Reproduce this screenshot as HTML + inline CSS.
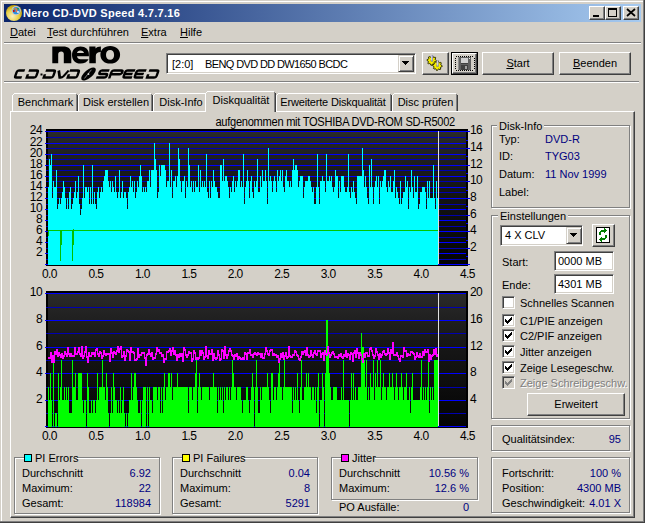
<!DOCTYPE html><html><head><meta charset="utf-8"><style>
html,body{margin:0;padding:0}
body{width:645px;height:523px;position:relative;overflow:hidden;background:#d4d0c8;font-family:"Liberation Sans",sans-serif;font-size:11px;color:#000}
.r,.t,.raised,.sunken,.grp,svg{position:absolute}
.t{white-space:nowrap;line-height:13px;letter-spacing:0px}
.raised{box-sizing:border-box;border:1px solid;border-color:#fff #404040 #404040 #fff;box-shadow:inset -1px -1px 0 #808080}
.sunken{box-sizing:border-box;border:1px solid;border-color:#808080 #fff #fff #808080;box-shadow:inset 1px 1px 0 #404040,inset -1px -1px 0 #d4d0c8;background:#fff}
.grp{box-sizing:border-box;border:1px solid #808080;box-shadow:inset 1px 1px 0 #fff,1px 1px 0 #fff}
.lbl{background:#d4d0c8;padding:0 2px}
.v{color:#000080}
u{text-decoration:underline;text-underline-offset:1px;text-decoration-thickness:1px}
</style></head><body>
<div class="r" style="left:0px;top:0px;width:645px;height:523px;background:#d4d0c8;"></div>
<div class="r" style="left:1px;top:1px;width:642px;height:1px;background:#ffffff;"></div>
<div class="r" style="left:1px;top:1px;width:1px;height:520px;background:#ffffff;"></div>
<div class="r" style="left:643px;top:0px;width:1px;height:522px;background:#808080;"></div>
<div class="r" style="left:0px;top:521px;width:644px;height:1px;background:#808080;"></div>
<div class="r" style="left:644px;top:0px;width:1px;height:523px;background:#404040;"></div>
<div class="r" style="left:0px;top:522px;width:645px;height:1px;background:#404040;"></div>
<div class="r" style="left:4px;top:4px;width:637px;height:18px;background:linear-gradient(to right,#0a246a,#a6caf0)"></div>
<div class="t" style="left:23px;top:7px;color:#fff;font-weight:bold;letter-spacing:0.28px">Nero CD-DVD Speed 4.7.7.16</div>
<svg style="left:5px;top:4px" width="18" height="18" viewBox="0 0 18 18">
<defs><radialGradient id="gold" cx="0.4" cy="0.7" r="0.7"><stop offset="0" stop-color="#f8f0c0"/><stop offset="0.55" stop-color="#e8d048"/><stop offset="1" stop-color="#b89800"/></radialGradient></defs>
<circle cx="9" cy="9" r="8" fill="url(#gold)"/>
<circle cx="11.2" cy="6.6" r="4.6" fill="#c8c8d0"/><circle cx="11.2" cy="6.6" r="3.6" fill="#2890e0"/>
<path d="M10 4 L12 6 L11 8" stroke="#f07040" stroke-width="1.4" fill="none"/><rect x="8" y="5.5" width="1.6" height="2.5" fill="#c01010"/><rect x="12" y="4" width="2" height="1.5" fill="#30a040"/><circle cx="13" cy="8" r="1" fill="#f0f0f0"/><rect x="8" y="4.5" width="1.2" height="1.2" fill="#f0e020"/>
</svg>
<div class="raised" style="left:589px;top:6px;width:16px;height:14px;background:#d4d0c8"></div>
<div class="raised" style="left:605px;top:6px;width:16px;height:14px;background:#d4d0c8"></div>
<div class="raised" style="left:623px;top:6px;width:16px;height:14px;background:#d4d0c8"></div>
<svg style="left:589px;top:6px" width="50" height="14" viewBox="0 0 50 14">
<rect x="4" y="9" width="6" height="2" fill="#000"/>
<rect x="19.5" y="2.5" width="8" height="8" fill="none" stroke="#000" stroke-width="1"/><rect x="19" y="2" width="9" height="2" fill="#000"/>
<path d="M38 3 L46 10 M46 3 L38 10" stroke="#000" stroke-width="1.7"/>
</svg>
<div class="t" style="left:10px;top:26px;"><u>D</u>atei</div>
<div class="t" style="left:47px;top:26px;"><u>T</u>est durchführen</div>
<div class="t" style="left:141px;top:26px;"><u>E</u>xtra</div>
<div class="t" style="left:180px;top:26px;"><u>H</u>ilfe</div>
<div class="r" style="left:4px;top:42px;width:637px;height:1px;background:#808080;"></div>
<div class="r" style="left:4px;top:43px;width:637px;height:1px;background:#ffffff;"></div>
<div class="r" style="left:4px;top:81px;width:635px;height:1px;background:#808080;"></div>
<div class="r" style="left:4px;top:82px;width:635px;height:1px;background:#ffffff;"></div>
<svg style="left:0px;top:0px" width="200" height="90" viewBox="0 0 200 90">
<g fill="#000" fill-rule="evenodd">
<path d="M52.3 46.4 H63 C68.5 46.4 71.3 49 71.3 53.5 V63.3 H63.8 V54 C63.8 52.3 63 51.4 61.3 51.4 C59.3 51.4 58.2 52.6 58.2 54.5 V63.3 H52.3 Z"/>
<path d="M80.5 46.4 C85.5 46.4 88.9 49.5 88.9 54 V56.3 H77 C77.3 58.2 78.5 59.3 80.5 59.3 H88.6 C87.3 62 84.3 63.6 80.5 63.6 C75.3 63.6 72 60.2 72 55 C72 49.8 75.3 46.4 80.5 46.4 Z M77 52.9 C77.3 51.3 78.5 50.4 80.4 50.4 C82.4 50.4 83.7 51.3 84 52.9 Z"/>
<path d="M89.3 46.5 H95.5 V48.6 C96.5 47.2 98.3 46.5 100.9 46.5 V51.9 C97.5 51.9 95.8 53 95.8 56 V63.3 H89.3 Z"/>
<path d="M110.2 46.1 C116.2 46.1 120.1 49.6 120.1 54.8 C120.1 60 116.2 63.6 110.2 63.6 C104.2 63.6 100.4 60 100.4 54.8 C100.4 49.6 104.2 46.1 110.2 46.1 Z M110.1 50.1 C107.6 50.1 106 51.9 106 54.9 C106 57.9 107.6 59.7 110.1 59.7 C112.6 59.7 114.1 57.9 114.1 54.9 C114.1 51.9 112.6 50.1 110.1 50.1 Z"/>
</g>
<g transform="translate(0 74) skewX(-20) translate(0 -74)" fill="none" stroke="#000" stroke-width="2.5">
<path d="M23.5 70.5 H17.8 Q16 70.5 16 72.3 V75.7 Q16 77.5 17.8 77.5 H23"/>
<path d="M27.5 70.5 H35.2 Q37 70.5 37 72.3 V75.7 Q37 77.5 35.2 77.5 H27 M28 74.2 V78.5"/>
<path d="M44.5 70.5 H52.2 Q54 70.5 54 72.3 V75.7 Q54 77.5 52.2 77.5 H44 M45 74.2 V78.5"/>
<path d="M57.5 70.5 L61 77.5 H62.2 Q63.6 77.5 64.4 76.2 L67.4 70.5"/>
<path d="M68.5 70.5 H76.2 Q78 70.5 78 72.3 V75.7 Q78 77.5 76.2 77.5 H68 M69 74.2 V78.5"/>
<path d="M108 70.5 H100.5 Q99 70.5 99 72 Q99 74 100.5 74 H105.8 Q107.4 74 107.4 75.7 Q107.4 77.5 105.6 77.5 H97.5"/>
<path d="M110.8 78.5 V72.3 Q110.8 70.5 112.6 70.5 H119.8 Q121.6 70.5 121.6 72.3 Q121.6 74.2 119.8 74.2 H111.5"/>
<path d="M133.8 70.5 H126.3 Q124.5 70.5 124.5 72.3 V75.7 Q124.5 77.5 126.3 77.5 H133.3 M125.5 74 H132.5"/>
<path d="M145 70.5 H137.5 Q135.7 70.5 135.7 72.3 V75.7 Q135.7 77.5 137.5 77.5 H144.5 M136.7 74 H143.7"/>
<path d="M147.8 70.5 H155.5 Q157.3 70.5 157.3 72.3 V75.7 Q157.3 77.5 155.5 77.5 H147.3 M148.3 74.2 V78.5"/>
</g>
<rect x="40.5" y="73.5" width="2" height="2" fill="#000"/>
<g transform="translate(88.5 74) rotate(-40)"><ellipse cx="0" cy="0" rx="9" ry="4" fill="#000"/><path d="M-6 0.8 L5 -1.4" stroke="#d8d8d8" stroke-width="0.7" opacity="0.8"/><circle cx="0" cy="0" r="0.9" fill="#e0e0e0"/></g>
</svg>
<div class="sunken" style="left:166px;top:53px;width:250px;height:21px;"></div>
<div class="t" style="left:172px;top:58px;">[2:0]</div>
<div class="t" style="left:205px;top:58px;letter-spacing:-0.62px">BENQ DVD DD DW1650 BCDC</div>
<div class="r" style="left:398px;top:55px;width:16px;height:17px;background:#d4d0c8;box-sizing:border-box;border:1px solid;border-color:#d4d0c8 #404040 #404040 #d4d0c8;box-shadow:inset 1px 1px 0 #fff,inset -1px -1px 0 #808080"></div>
<svg style="left:402px;top:61px" width="7" height="4" shape-rendering="crispEdges"><rect x="0" y="0" width="7" height="1"/><rect x="1" y="1" width="5" height="1"/><rect x="2" y="2" width="3" height="1"/><rect x="3" y="3" width="1" height="1"/></svg>
<div class="raised" style="left:422px;top:52px;width:27px;height:23px;background:#d4d0c8"></div>
<svg style="left:422px;top:52px" width="27" height="23" viewBox="0 0 27 23">
<polygon points="14.60,8.50 14.51,9.44 13.13,9.88 12.79,10.50 13.19,11.89 12.47,12.49 11.18,11.83 10.50,12.03 9.80,13.30 8.86,13.21 8.42,11.83 7.80,11.49 6.41,11.89 5.81,11.17 6.47,9.88 6.27,9.20 5.00,8.50 5.09,7.56 6.47,7.12 6.81,6.50 6.41,5.11 7.13,4.51 8.42,5.17 9.10,4.97 9.80,3.70 10.74,3.79 11.18,5.17 11.80,5.51 13.19,5.11 13.79,5.83 13.13,7.12 13.33,7.80" fill="#f8f000" stroke="#202000" stroke-width="0.9"/><circle cx="9.8" cy="8.5" r="1.6" fill="#c8c000"/>
<polygon points="20.20,13.70 20.11,14.64 18.73,15.08 18.39,15.70 18.79,17.09 18.07,17.69 16.78,17.03 16.10,17.23 15.40,18.50 14.46,18.41 14.02,17.03 13.40,16.69 12.01,17.09 11.41,16.37 12.07,15.08 11.87,14.40 10.60,13.70 10.69,12.76 12.07,12.32 12.41,11.70 12.01,10.31 12.73,9.71 14.02,10.37 14.70,10.17 15.40,8.90 16.34,8.99 16.78,10.37 17.40,10.71 18.79,10.31 19.39,11.03 18.73,12.32 18.93,13.00" fill="#f8f000" stroke="#202000" stroke-width="0.9"/><circle cx="15.4" cy="13.7" r="1.6" fill="#c8c000"/>
<rect x="9" y="3" width="2" height="6.5" fill="#9090b0"/><rect x="9.3" y="3.3" width="0.8" height="5" fill="#e8e8f8"/>
<rect x="14.6" y="8.2" width="2" height="6.5" fill="#9090b0"/><rect x="14.9" y="8.5" width="0.8" height="5" fill="#e8e8f8"/>
</svg>
<div class="r" style="left:451px;top:52px;width:27px;height:23px;box-sizing:border-box;border:1px solid #000;background:#d4d0c8"></div>
<div class="raised" style="left:452px;top:53px;width:25px;height:21px;background:#d4d0c8"></div>
<svg style="left:451px;top:52px" width="27" height="23" viewBox="0 0 27 23" shape-rendering="crispEdges">
<g fill="#000"><rect x="5" y="4" width="1" height="1"/><rect x="5" y="18" width="1" height="1"/><rect x="7" y="4" width="1" height="1"/><rect x="7" y="18" width="1" height="1"/><rect x="9" y="4" width="1" height="1"/><rect x="9" y="18" width="1" height="1"/><rect x="11" y="4" width="1" height="1"/><rect x="11" y="18" width="1" height="1"/><rect x="13" y="4" width="1" height="1"/><rect x="13" y="18" width="1" height="1"/><rect x="15" y="4" width="1" height="1"/><rect x="15" y="18" width="1" height="1"/><rect x="17" y="4" width="1" height="1"/><rect x="17" y="18" width="1" height="1"/><rect x="19" y="4" width="1" height="1"/><rect x="19" y="18" width="1" height="1"/><rect x="21" y="4" width="1" height="1"/><rect x="21" y="18" width="1" height="1"/><rect x="4" y="6" width="1" height="1"/><rect x="23" y="6" width="1" height="1"/><rect x="4" y="8" width="1" height="1"/><rect x="23" y="8" width="1" height="1"/><rect x="4" y="10" width="1" height="1"/><rect x="23" y="10" width="1" height="1"/><rect x="4" y="12" width="1" height="1"/><rect x="23" y="12" width="1" height="1"/><rect x="4" y="14" width="1" height="1"/><rect x="23" y="14" width="1" height="1"/><rect x="4" y="16" width="1" height="1"/><rect x="23" y="16" width="1" height="1"/></g>
<rect x="7" y="5" width="13" height="13" fill="#606060"/><rect x="7" y="5" width="1" height="13" fill="#909090"/>
<rect x="10" y="6" width="7" height="5" fill="#d0d0d0"/><rect x="10" y="11" width="7" height="1" fill="#404040"/>
<rect x="10" y="13" width="7" height="5" fill="#404040"/><rect x="14" y="14" width="2" height="3" fill="#a0a0a0"/><rect x="18" y="6" width="1" height="1" fill="#f0f0f0"/>
</svg>
<div class="raised" style="left:482px;top:52px;width:72px;height:23px;background:#d4d0c8"></div>
<div class="t" style="left:483.0px;width:70px;text-align:center;top:57px;"><u>S</u>tart</div>
<div class="raised" style="left:559px;top:52px;width:72px;height:23px;background:#d4d0c8"></div>
<div class="t" style="left:560.0px;width:70px;text-align:center;top:57px;"><u>B</u>eenden</div>
<div class="r" style="left:10px;top:111px;width:625px;height:407px;box-sizing:border-box;border:1px solid;border-color:#fff #404040 #404040 #fff;box-shadow:inset -1px -1px 0 #808080"></div>
<div class="r" style="left:12px;top:93px;width:66px;height:18px;background:#d4d0c8"></div>
<div class="r" style="left:14px;top:93px;width:62px;height:1px;background:#ffffff;"></div>
<div class="r" style="left:13px;top:94px;width:1px;height:1px;background:#ffffff;"></div>
<div class="r" style="left:12px;top:95px;width:1px;height:16px;background:#ffffff;"></div>
<div class="r" style="left:76px;top:94px;width:1px;height:17px;background:#808080;"></div>
<div class="r" style="left:77px;top:95px;width:1px;height:16px;background:#404040;"></div>
<div class="t" style="left:8.0px;width:75px;text-align:center;top:96px;">Benchmark</div>
<div class="r" style="left:78px;top:93px;width:75px;height:18px;background:#d4d0c8"></div>
<div class="r" style="left:80px;top:93px;width:71px;height:1px;background:#ffffff;"></div>
<div class="r" style="left:79px;top:94px;width:1px;height:1px;background:#ffffff;"></div>
<div class="r" style="left:78px;top:95px;width:1px;height:16px;background:#ffffff;"></div>
<div class="r" style="left:151px;top:94px;width:1px;height:17px;background:#808080;"></div>
<div class="r" style="left:152px;top:95px;width:1px;height:16px;background:#404040;"></div>
<div class="t" style="left:74.0px;width:84px;text-align:center;top:96px;">Disk erstellen</div>
<div class="r" style="left:153px;top:93px;width:55px;height:18px;background:#d4d0c8"></div>
<div class="r" style="left:155px;top:93px;width:51px;height:1px;background:#ffffff;"></div>
<div class="r" style="left:154px;top:94px;width:1px;height:1px;background:#ffffff;"></div>
<div class="r" style="left:153px;top:95px;width:1px;height:16px;background:#ffffff;"></div>
<div class="r" style="left:206px;top:94px;width:1px;height:17px;background:#808080;"></div>
<div class="r" style="left:207px;top:95px;width:1px;height:16px;background:#404040;"></div>
<div class="t" style="left:149.0px;width:64px;text-align:center;top:96px;">Disk-Info</div>
<div class="r" style="left:276px;top:93px;width:116px;height:18px;background:#d4d0c8"></div>
<div class="r" style="left:278px;top:93px;width:112px;height:1px;background:#ffffff;"></div>
<div class="r" style="left:277px;top:94px;width:1px;height:1px;background:#ffffff;"></div>
<div class="r" style="left:276px;top:95px;width:1px;height:16px;background:#ffffff;"></div>
<div class="r" style="left:390px;top:94px;width:1px;height:17px;background:#808080;"></div>
<div class="r" style="left:391px;top:95px;width:1px;height:16px;background:#404040;"></div>
<div class="t" style="left:270.5px;width:125px;text-align:center;top:96px;letter-spacing:-0.18px">Erweiterte Diskqualität</div>
<div class="r" style="left:392px;top:93px;width:66px;height:18px;background:#d4d0c8"></div>
<div class="r" style="left:394px;top:93px;width:62px;height:1px;background:#ffffff;"></div>
<div class="r" style="left:393px;top:94px;width:1px;height:1px;background:#ffffff;"></div>
<div class="r" style="left:392px;top:95px;width:1px;height:16px;background:#ffffff;"></div>
<div class="r" style="left:456px;top:94px;width:1px;height:17px;background:#808080;"></div>
<div class="r" style="left:457px;top:95px;width:1px;height:16px;background:#404040;"></div>
<div class="t" style="left:388.0px;width:75px;text-align:center;top:96px;">Disc prüfen</div>
<div class="r" style="left:205px;top:91px;width:71px;height:21px;background:#d4d0c8"></div>
<div class="r" style="left:207px;top:91px;width:67px;height:1px;background:#ffffff;"></div>
<div class="r" style="left:206px;top:92px;width:1px;height:1px;background:#ffffff;"></div>
<div class="r" style="left:205px;top:93px;width:1px;height:19px;background:#ffffff;"></div>
<div class="r" style="left:274px;top:92px;width:1px;height:20px;background:#808080;"></div>
<div class="r" style="left:275px;top:93px;width:1px;height:19px;background:#404040;"></div>
<div class="t" style="left:201.0px;width:80px;text-align:center;top:94px;">Diskqualität</div>
<div class="grp" style="left:491px;top:125px;width:139px;height:83px"></div>
<div class="t" style="left:497px;top:120px;"><span class="lbl">Disk-Info</span></div>
<div class="t" style="left:499px;top:133px;">Typ:</div>
<div class="t" style="left:545px;top:133px;color:#000080">DVD-R</div>
<div class="t" style="left:499px;top:150px;">ID:</div>
<div class="t" style="left:545px;top:150px;color:#000080">TYG03</div>
<div class="t" style="left:499px;top:168px;">Datum:</div>
<div class="t" style="left:545px;top:168px;color:#000080">11 Nov 1999</div>
<div class="t" style="left:499px;top:186px;">Label:</div>
<div class="grp" style="left:491px;top:215px;width:139px;height:204px"></div>
<div class="t" style="left:498px;top:210px;"><span class="lbl">Einstellungen</span></div>
<div class="sunken" style="left:500px;top:225px;width:83px;height:21px;"></div>
<div class="t" style="left:505px;top:229px;">4 X CLV</div>
<div class="r" style="left:566px;top:227px;width:16px;height:17px;background:#d4d0c8;box-sizing:border-box;border:1px solid;border-color:#d4d0c8 #404040 #404040 #d4d0c8;box-shadow:inset 1px 1px 0 #fff,inset -1px -1px 0 #808080"></div>
<svg style="left:570px;top:233px" width="7" height="4" shape-rendering="crispEdges"><rect x="0" y="0" width="7" height="1"/><rect x="1" y="1" width="5" height="1"/><rect x="2" y="2" width="3" height="1"/><rect x="3" y="3" width="1" height="1"/></svg>
<div class="raised" style="left:592px;top:224px;width:23px;height:23px;background:#d4d0c8"></div>
<svg style="left:592px;top:224px" width="23" height="23" viewBox="0 0 23 23" shape-rendering="crispEdges">
<rect x="4" y="3" width="14" height="16" fill="#000"/><rect x="5" y="4" width="12" height="14" fill="#fff"/>
<g fill="#008000">
<rect x="7" y="8" width="2" height="3"/><rect x="8" y="7" width="2" height="1"/><rect x="9" y="6" width="4" height="2"/><rect x="12" y="4" width="1" height="5"/><rect x="13" y="5" width="1" height="3"/><rect x="14" y="6" width="1" height="1"/>
<rect x="13" y="11" width="2" height="3"/><rect x="12" y="14" width="2" height="1"/><rect x="9" y="14" width="4" height="2"/><rect x="9" y="13" width="1" height="5"/><rect x="8" y="14" width="1" height="3"/><rect x="7" y="15" width="1" height="1"/>
</g></svg>
<div class="t" style="left:502px;top:256px;">Start:</div>
<div class="sunken" style="left:554px;top:251px;width:60px;height:20px;"></div>
<div class="t" style="left:558px;top:255px;">0000 MB</div>
<div class="t" style="left:502px;top:279px;">Ende:</div>
<div class="sunken" style="left:554px;top:274px;width:60px;height:20px;"></div>
<div class="t" style="left:558px;top:278px;">4301 MB</div>
<div class="sunken" style="left:502px;top:296px;width:13px;height:13px;"></div>
<div class="t" style="left:520px;top:297px;">Schnelles Scannen</div>
<div class="sunken" style="left:502px;top:314px;width:13px;height:13px;"></div>
<svg style="left:502px;top:314px" width="13" height="13" fill="#000" shape-rendering="crispEdges"><rect x="9" y="3" width="1" height="1"/><rect x="8" y="4" width="1" height="1"/><rect x="9" y="4" width="1" height="1"/><rect x="3" y="5" width="1" height="1"/><rect x="7" y="5" width="1" height="1"/><rect x="8" y="5" width="1" height="1"/><rect x="9" y="5" width="1" height="1"/><rect x="3" y="6" width="1" height="1"/><rect x="4" y="6" width="1" height="1"/><rect x="6" y="6" width="1" height="1"/><rect x="7" y="6" width="1" height="1"/><rect x="8" y="6" width="1" height="1"/><rect x="3" y="7" width="1" height="1"/><rect x="4" y="7" width="1" height="1"/><rect x="5" y="7" width="1" height="1"/><rect x="6" y="7" width="1" height="1"/><rect x="7" y="7" width="1" height="1"/><rect x="4" y="8" width="1" height="1"/><rect x="5" y="8" width="1" height="1"/><rect x="6" y="8" width="1" height="1"/><rect x="5" y="9" width="1" height="1"/></svg>
<div class="t" style="left:520px;top:315px;">C1/PIE anzeigen</div>
<div class="sunken" style="left:502px;top:329px;width:13px;height:13px;"></div>
<svg style="left:502px;top:329px" width="13" height="13" fill="#000" shape-rendering="crispEdges"><rect x="9" y="3" width="1" height="1"/><rect x="8" y="4" width="1" height="1"/><rect x="9" y="4" width="1" height="1"/><rect x="3" y="5" width="1" height="1"/><rect x="7" y="5" width="1" height="1"/><rect x="8" y="5" width="1" height="1"/><rect x="9" y="5" width="1" height="1"/><rect x="3" y="6" width="1" height="1"/><rect x="4" y="6" width="1" height="1"/><rect x="6" y="6" width="1" height="1"/><rect x="7" y="6" width="1" height="1"/><rect x="8" y="6" width="1" height="1"/><rect x="3" y="7" width="1" height="1"/><rect x="4" y="7" width="1" height="1"/><rect x="5" y="7" width="1" height="1"/><rect x="6" y="7" width="1" height="1"/><rect x="7" y="7" width="1" height="1"/><rect x="4" y="8" width="1" height="1"/><rect x="5" y="8" width="1" height="1"/><rect x="6" y="8" width="1" height="1"/><rect x="5" y="9" width="1" height="1"/></svg>
<div class="t" style="left:520px;top:330px;">C2/PIF anzeigen</div>
<div class="sunken" style="left:502px;top:345px;width:13px;height:13px;"></div>
<svg style="left:502px;top:345px" width="13" height="13" fill="#000" shape-rendering="crispEdges"><rect x="9" y="3" width="1" height="1"/><rect x="8" y="4" width="1" height="1"/><rect x="9" y="4" width="1" height="1"/><rect x="3" y="5" width="1" height="1"/><rect x="7" y="5" width="1" height="1"/><rect x="8" y="5" width="1" height="1"/><rect x="9" y="5" width="1" height="1"/><rect x="3" y="6" width="1" height="1"/><rect x="4" y="6" width="1" height="1"/><rect x="6" y="6" width="1" height="1"/><rect x="7" y="6" width="1" height="1"/><rect x="8" y="6" width="1" height="1"/><rect x="3" y="7" width="1" height="1"/><rect x="4" y="7" width="1" height="1"/><rect x="5" y="7" width="1" height="1"/><rect x="6" y="7" width="1" height="1"/><rect x="7" y="7" width="1" height="1"/><rect x="4" y="8" width="1" height="1"/><rect x="5" y="8" width="1" height="1"/><rect x="6" y="8" width="1" height="1"/><rect x="5" y="9" width="1" height="1"/></svg>
<div class="t" style="left:520px;top:346px;">Jitter anzeigen</div>
<div class="sunken" style="left:502px;top:361px;width:13px;height:13px;"></div>
<svg style="left:502px;top:361px" width="13" height="13" fill="#000" shape-rendering="crispEdges"><rect x="9" y="3" width="1" height="1"/><rect x="8" y="4" width="1" height="1"/><rect x="9" y="4" width="1" height="1"/><rect x="3" y="5" width="1" height="1"/><rect x="7" y="5" width="1" height="1"/><rect x="8" y="5" width="1" height="1"/><rect x="9" y="5" width="1" height="1"/><rect x="3" y="6" width="1" height="1"/><rect x="4" y="6" width="1" height="1"/><rect x="6" y="6" width="1" height="1"/><rect x="7" y="6" width="1" height="1"/><rect x="8" y="6" width="1" height="1"/><rect x="3" y="7" width="1" height="1"/><rect x="4" y="7" width="1" height="1"/><rect x="5" y="7" width="1" height="1"/><rect x="6" y="7" width="1" height="1"/><rect x="7" y="7" width="1" height="1"/><rect x="4" y="8" width="1" height="1"/><rect x="5" y="8" width="1" height="1"/><rect x="6" y="8" width="1" height="1"/><rect x="5" y="9" width="1" height="1"/></svg>
<div class="t" style="left:520px;top:362px;">Zeige Lesegeschw.</div>
<div class="sunken" style="left:502px;top:376px;width:13px;height:13px;background:#d4d0c8"></div>
<svg style="left:502px;top:376px" width="13" height="13" fill="#808080" shape-rendering="crispEdges"><rect x="9" y="3" width="1" height="1"/><rect x="8" y="4" width="1" height="1"/><rect x="9" y="4" width="1" height="1"/><rect x="3" y="5" width="1" height="1"/><rect x="7" y="5" width="1" height="1"/><rect x="8" y="5" width="1" height="1"/><rect x="9" y="5" width="1" height="1"/><rect x="3" y="6" width="1" height="1"/><rect x="4" y="6" width="1" height="1"/><rect x="6" y="6" width="1" height="1"/><rect x="7" y="6" width="1" height="1"/><rect x="8" y="6" width="1" height="1"/><rect x="3" y="7" width="1" height="1"/><rect x="4" y="7" width="1" height="1"/><rect x="5" y="7" width="1" height="1"/><rect x="6" y="7" width="1" height="1"/><rect x="7" y="7" width="1" height="1"/><rect x="4" y="8" width="1" height="1"/><rect x="5" y="8" width="1" height="1"/><rect x="6" y="8" width="1" height="1"/><rect x="5" y="9" width="1" height="1"/></svg>
<div class="t" style="left:521px;top:378px;color:#fff;">Zeige Schreibgeschw.</div>
<div class="t" style="left:520px;top:377px;color:#808080;">Zeige Schreibgeschw.</div>
<div class="raised" style="left:527px;top:393px;width:98px;height:23px;background:#d4d0c8"></div>
<div class="t" style="left:531.0px;width:90px;text-align:center;top:398px;">Erweitert</div>
<div class="grp" style="left:491px;top:425px;width:139px;height:26px"></div>
<div class="t" style="left:502px;top:433px;">Qualitätsindex:</div>
<div class="t" style="right:24px;top:433px;color:#000080">95</div>
<div class="grp" style="left:491px;top:457px;width:139px;height:56px"></div>
<div class="t" style="left:502px;top:467px;">Fortschritt:</div>
<div class="t" style="right:24px;top:467px;color:#000080">100 %</div>
<div class="t" style="left:502px;top:482px;">Position:</div>
<div class="t" style="right:24px;top:482px;color:#000080">4300 MB</div>
<div class="t" style="left:502px;top:497px;">Geschwindigkeit:</div>
<div class="t" style="right:24px;top:497px;color:#000080">4.01 X</div>
<div class="grp" style="left:14px;top:457px;width:146px;height:57px"></div>
<div class="r" style="left:24px;top:452px;width:53px;height:12px;background:#d4d0c8"></div>
<div class="r" style="left:24px;top:454px;width:8px;height:8px;box-sizing:border-box;border:1px solid #000;background:#00ffff"></div>
<div class="t" style="left:35px;top:452px;">PI Errors</div>
<div class="t" style="left:22px;top:467px;">Durchschnitt</div>
<div class="t" style="right:494px;top:467px;color:#000080">6.92</div>
<div class="t" style="left:22px;top:482px;">Maximum:</div>
<div class="t" style="right:494px;top:482px;color:#000080">22</div>
<div class="t" style="left:22px;top:497px;">Gesamt:</div>
<div class="t" style="right:494px;top:497px;color:#000080">118984</div>
<div class="grp" style="left:172px;top:457px;width:146px;height:57px"></div>
<div class="r" style="left:182px;top:452px;width:62px;height:12px;background:#d4d0c8"></div>
<div class="r" style="left:182px;top:454px;width:8px;height:8px;box-sizing:border-box;border:1px solid #000;background:#ffff00"></div>
<div class="t" style="left:193px;top:452px;">PI Failures</div>
<div class="t" style="left:180px;top:467px;">Durchschnitt</div>
<div class="t" style="right:335px;top:467px;color:#000080">0.04</div>
<div class="t" style="left:180px;top:482px;">Maximum:</div>
<div class="t" style="right:335px;top:482px;color:#000080">8</div>
<div class="t" style="left:180px;top:497px;">Gesamt:</div>
<div class="t" style="right:335px;top:497px;color:#000080">5291</div>
<div class="grp" style="left:331px;top:457px;width:147px;height:43px"></div>
<div class="r" style="left:341px;top:452px;width:34px;height:12px;background:#d4d0c8"></div>
<div class="r" style="left:341px;top:454px;width:8px;height:8px;box-sizing:border-box;border:1px solid #000;background:#ff00ff"></div>
<div class="t" style="left:352px;top:452px;">Jitter</div>
<div class="t" style="left:339px;top:467px;">Durchschnitt</div>
<div class="t" style="right:176px;top:467px;color:#000080">10.56 %</div>
<div class="t" style="left:339px;top:482px;">Maximum:</div>
<div class="t" style="right:176px;top:482px;color:#000080">12.6 %</div>
<div class="t" style="left:339px;top:501px;">PO Ausfälle:</div>
<div class="t" style="right:176px;top:501px;color:#000080">0</div>
<svg style="left:0px;top:0px" width="645" height="523" viewBox="0 0 645 523" shape-rendering="crispEdges"><defs><linearGradient id="bg129" x1="0" y1="0" x2="0" y2="1"><stop offset="0" stop-color="#2a2a2a"/><stop offset="0.35" stop-color="#181818"/><stop offset="1" stop-color="#040404"/></linearGradient></defs><rect x="46" y="129" width="422" height="137" fill="#000"/><rect x="48" y="131" width="418" height="133" fill="url(#bg129)"/><rect x="45" y="264" width="421" height="1" fill="#0000ff"/><rect x="46" y="259" width="420" height="1" fill="#0000b0"/><rect x="45" y="253" width="421" height="1" fill="#0000ff"/><rect x="46" y="248" width="420" height="1" fill="#0000b0"/><rect x="45" y="242" width="421" height="1" fill="#0000ff"/><rect x="46" y="237" width="420" height="1" fill="#0000b0"/><rect x="45" y="231" width="421" height="1" fill="#0000ff"/><rect x="46" y="226" width="420" height="1" fill="#0000b0"/><rect x="45" y="220" width="421" height="1" fill="#0000ff"/><rect x="46" y="215" width="420" height="1" fill="#0000b0"/><rect x="45" y="209" width="421" height="1" fill="#0000ff"/><rect x="46" y="204" width="420" height="1" fill="#0000b0"/><rect x="45" y="198" width="421" height="1" fill="#0000ff"/><rect x="46" y="192" width="420" height="1" fill="#0000b0"/><rect x="45" y="187" width="421" height="1" fill="#0000ff"/><rect x="46" y="181" width="420" height="1" fill="#0000b0"/><rect x="45" y="176" width="421" height="1" fill="#0000ff"/><rect x="46" y="170" width="420" height="1" fill="#0000b0"/><rect x="45" y="165" width="421" height="1" fill="#0000ff"/><rect x="46" y="159" width="420" height="1" fill="#0000b0"/><rect x="45" y="154" width="421" height="1" fill="#0000ff"/><rect x="46" y="148" width="420" height="1" fill="#0000b0"/><rect x="45" y="143" width="421" height="1" fill="#0000ff"/><rect x="46" y="137" width="420" height="1" fill="#0000b0"/><rect x="45" y="131" width="421" height="1" fill="#0000ff"/><rect x="48" y="187" width="1" height="78" fill="#00ffff"/><rect x="49" y="159" width="1" height="106" fill="#00ffff"/><rect x="50" y="165" width="1" height="100" fill="#00ffff"/><rect x="51" y="154" width="1" height="111" fill="#00ffff"/><rect x="52" y="198" width="1" height="67" fill="#00ffff"/><rect x="53" y="181" width="1" height="84" fill="#00ffff"/><rect x="54" y="187" width="2" height="78" fill="#00ffff"/><rect x="56" y="170" width="1" height="95" fill="#00ffff"/><rect x="57" y="209" width="1" height="56" fill="#00ffff"/><rect x="58" y="204" width="1" height="61" fill="#00ffff"/><rect x="59" y="198" width="1" height="67" fill="#00ffff"/><rect x="60" y="204" width="1" height="61" fill="#00ffff"/><rect x="61" y="198" width="1" height="67" fill="#00ffff"/><rect x="62" y="192" width="1" height="73" fill="#00ffff"/><rect x="63" y="181" width="1" height="84" fill="#00ffff"/><rect x="64" y="187" width="1" height="78" fill="#00ffff"/><rect x="65" y="198" width="1" height="67" fill="#00ffff"/><rect x="66" y="209" width="1" height="56" fill="#00ffff"/><rect x="67" y="198" width="1" height="67" fill="#00ffff"/><rect x="68" y="209" width="1" height="56" fill="#00ffff"/><rect x="69" y="192" width="1" height="73" fill="#00ffff"/><rect x="70" y="187" width="1" height="78" fill="#00ffff"/><rect x="71" y="209" width="1" height="56" fill="#00ffff"/><rect x="72" y="204" width="1" height="61" fill="#00ffff"/><rect x="73" y="198" width="1" height="67" fill="#00ffff"/><rect x="74" y="192" width="1" height="73" fill="#00ffff"/><rect x="75" y="181" width="1" height="84" fill="#00ffff"/><rect x="76" y="198" width="1" height="67" fill="#00ffff"/><rect x="77" y="192" width="1" height="73" fill="#00ffff"/><rect x="78" y="176" width="1" height="89" fill="#00ffff"/><rect x="79" y="204" width="1" height="61" fill="#00ffff"/><rect x="80" y="215" width="1" height="50" fill="#00ffff"/><rect x="81" y="209" width="1" height="56" fill="#00ffff"/><rect x="82" y="198" width="1" height="67" fill="#00ffff"/><rect x="83" y="165" width="1" height="100" fill="#00ffff"/><rect x="84" y="198" width="1" height="67" fill="#00ffff"/><rect x="85" y="187" width="2" height="78" fill="#00ffff"/><rect x="87" y="192" width="1" height="73" fill="#00ffff"/><rect x="88" y="187" width="1" height="78" fill="#00ffff"/><rect x="89" y="204" width="1" height="61" fill="#00ffff"/><rect x="90" y="187" width="1" height="78" fill="#00ffff"/><rect x="91" y="204" width="1" height="61" fill="#00ffff"/><rect x="92" y="165" width="1" height="100" fill="#00ffff"/><rect x="93" y="204" width="1" height="61" fill="#00ffff"/><rect x="94" y="192" width="1" height="73" fill="#00ffff"/><rect x="95" y="204" width="1" height="61" fill="#00ffff"/><rect x="96" y="209" width="1" height="56" fill="#00ffff"/><rect x="97" y="192" width="1" height="73" fill="#00ffff"/><rect x="98" y="187" width="1" height="78" fill="#00ffff"/><rect x="99" y="198" width="1" height="67" fill="#00ffff"/><rect x="100" y="192" width="1" height="73" fill="#00ffff"/><rect x="101" y="187" width="1" height="78" fill="#00ffff"/><rect x="102" y="192" width="1" height="73" fill="#00ffff"/><rect x="103" y="181" width="1" height="84" fill="#00ffff"/><rect x="104" y="176" width="1" height="89" fill="#00ffff"/><rect x="105" y="170" width="3" height="95" fill="#00ffff"/><rect x="108" y="181" width="1" height="84" fill="#00ffff"/><rect x="109" y="187" width="1" height="78" fill="#00ffff"/><rect x="110" y="181" width="1" height="84" fill="#00ffff"/><rect x="111" y="192" width="1" height="73" fill="#00ffff"/><rect x="112" y="181" width="1" height="84" fill="#00ffff"/><rect x="113" y="187" width="1" height="78" fill="#00ffff"/><rect x="114" y="192" width="1" height="73" fill="#00ffff"/><rect x="115" y="176" width="1" height="89" fill="#00ffff"/><rect x="116" y="192" width="1" height="73" fill="#00ffff"/><rect x="117" y="198" width="1" height="67" fill="#00ffff"/><rect x="118" y="192" width="1" height="73" fill="#00ffff"/><rect x="119" y="170" width="1" height="95" fill="#00ffff"/><rect x="120" y="198" width="1" height="67" fill="#00ffff"/><rect x="121" y="192" width="1" height="73" fill="#00ffff"/><rect x="122" y="181" width="1" height="84" fill="#00ffff"/><rect x="123" y="198" width="1" height="67" fill="#00ffff"/><rect x="124" y="192" width="2" height="73" fill="#00ffff"/><rect x="126" y="198" width="1" height="67" fill="#00ffff"/><rect x="127" y="209" width="1" height="56" fill="#00ffff"/><rect x="128" y="192" width="1" height="73" fill="#00ffff"/><rect x="129" y="187" width="1" height="78" fill="#00ffff"/><rect x="130" y="176" width="1" height="89" fill="#00ffff"/><rect x="131" y="187" width="1" height="78" fill="#00ffff"/><rect x="132" y="181" width="1" height="84" fill="#00ffff"/><rect x="133" y="192" width="1" height="73" fill="#00ffff"/><rect x="134" y="181" width="1" height="84" fill="#00ffff"/><rect x="135" y="198" width="1" height="67" fill="#00ffff"/><rect x="136" y="192" width="1" height="73" fill="#00ffff"/><rect x="137" y="181" width="1" height="84" fill="#00ffff"/><rect x="138" y="187" width="1" height="78" fill="#00ffff"/><rect x="139" y="176" width="1" height="89" fill="#00ffff"/><rect x="140" y="165" width="1" height="100" fill="#00ffff"/><rect x="141" y="176" width="1" height="89" fill="#00ffff"/><rect x="142" y="192" width="1" height="73" fill="#00ffff"/><rect x="143" y="187" width="1" height="78" fill="#00ffff"/><rect x="144" y="192" width="1" height="73" fill="#00ffff"/><rect x="145" y="187" width="1" height="78" fill="#00ffff"/><rect x="146" y="192" width="1" height="73" fill="#00ffff"/><rect x="147" y="181" width="2" height="84" fill="#00ffff"/><rect x="149" y="170" width="1" height="95" fill="#00ffff"/><rect x="150" y="187" width="1" height="78" fill="#00ffff"/><rect x="151" y="170" width="3" height="95" fill="#00ffff"/><rect x="154" y="143" width="1" height="122" fill="#00ffff"/><rect x="155" y="159" width="1" height="106" fill="#00ffff"/><rect x="156" y="170" width="1" height="95" fill="#00ffff"/><rect x="157" y="198" width="1" height="67" fill="#00ffff"/><rect x="158" y="192" width="1" height="73" fill="#00ffff"/><rect x="159" y="165" width="1" height="100" fill="#00ffff"/><rect x="160" y="176" width="1" height="89" fill="#00ffff"/><rect x="161" y="165" width="4" height="100" fill="#00ffff"/><rect x="165" y="170" width="1" height="95" fill="#00ffff"/><rect x="166" y="187" width="1" height="78" fill="#00ffff"/><rect x="167" y="181" width="2" height="84" fill="#00ffff"/><rect x="169" y="143" width="1" height="122" fill="#00ffff"/><rect x="170" y="187" width="1" height="78" fill="#00ffff"/><rect x="171" y="170" width="1" height="95" fill="#00ffff"/><rect x="172" y="198" width="1" height="67" fill="#00ffff"/><rect x="173" y="181" width="2" height="84" fill="#00ffff"/><rect x="175" y="176" width="1" height="89" fill="#00ffff"/><rect x="176" y="187" width="1" height="78" fill="#00ffff"/><rect x="177" y="176" width="1" height="89" fill="#00ffff"/><rect x="178" y="148" width="1" height="117" fill="#00ffff"/><rect x="179" y="159" width="1" height="106" fill="#00ffff"/><rect x="180" y="181" width="1" height="84" fill="#00ffff"/><rect x="181" y="192" width="1" height="73" fill="#00ffff"/><rect x="182" y="181" width="2" height="84" fill="#00ffff"/><rect x="184" y="176" width="1" height="89" fill="#00ffff"/><rect x="185" y="198" width="1" height="67" fill="#00ffff"/><rect x="186" y="181" width="1" height="84" fill="#00ffff"/><rect x="187" y="187" width="1" height="78" fill="#00ffff"/><rect x="188" y="148" width="1" height="117" fill="#00ffff"/><rect x="189" y="165" width="1" height="100" fill="#00ffff"/><rect x="190" y="187" width="1" height="78" fill="#00ffff"/><rect x="191" y="181" width="1" height="84" fill="#00ffff"/><rect x="192" y="192" width="1" height="73" fill="#00ffff"/><rect x="193" y="181" width="1" height="84" fill="#00ffff"/><rect x="194" y="192" width="1" height="73" fill="#00ffff"/><rect x="195" y="181" width="1" height="84" fill="#00ffff"/><rect x="196" y="187" width="2" height="78" fill="#00ffff"/><rect x="198" y="165" width="1" height="100" fill="#00ffff"/><rect x="199" y="192" width="1" height="73" fill="#00ffff"/><rect x="200" y="170" width="1" height="95" fill="#00ffff"/><rect x="201" y="187" width="1" height="78" fill="#00ffff"/><rect x="202" y="181" width="1" height="84" fill="#00ffff"/><rect x="203" y="187" width="1" height="78" fill="#00ffff"/><rect x="204" y="181" width="1" height="84" fill="#00ffff"/><rect x="205" y="187" width="1" height="78" fill="#00ffff"/><rect x="206" y="154" width="1" height="111" fill="#00ffff"/><rect x="207" y="192" width="1" height="73" fill="#00ffff"/><rect x="208" y="198" width="1" height="67" fill="#00ffff"/><rect x="209" y="181" width="1" height="84" fill="#00ffff"/><rect x="210" y="198" width="1" height="67" fill="#00ffff"/><rect x="211" y="181" width="1" height="84" fill="#00ffff"/><rect x="212" y="187" width="1" height="78" fill="#00ffff"/><rect x="213" y="170" width="1" height="95" fill="#00ffff"/><rect x="214" y="181" width="1" height="84" fill="#00ffff"/><rect x="215" y="187" width="2" height="78" fill="#00ffff"/><rect x="217" y="192" width="1" height="73" fill="#00ffff"/><rect x="218" y="198" width="2" height="67" fill="#00ffff"/><rect x="220" y="165" width="2" height="100" fill="#00ffff"/><rect x="222" y="181" width="1" height="84" fill="#00ffff"/><rect x="223" y="159" width="1" height="106" fill="#00ffff"/><rect x="224" y="181" width="1" height="84" fill="#00ffff"/><rect x="225" y="176" width="2" height="89" fill="#00ffff"/><rect x="227" y="181" width="1" height="84" fill="#00ffff"/><rect x="228" y="187" width="1" height="78" fill="#00ffff"/><rect x="229" y="198" width="1" height="67" fill="#00ffff"/><rect x="230" y="187" width="1" height="78" fill="#00ffff"/><rect x="231" y="192" width="1" height="73" fill="#00ffff"/><rect x="232" y="181" width="1" height="84" fill="#00ffff"/><rect x="233" y="176" width="1" height="89" fill="#00ffff"/><rect x="234" y="192" width="1" height="73" fill="#00ffff"/><rect x="235" y="181" width="1" height="84" fill="#00ffff"/><rect x="236" y="187" width="1" height="78" fill="#00ffff"/><rect x="237" y="181" width="1" height="84" fill="#00ffff"/><rect x="238" y="170" width="2" height="95" fill="#00ffff"/><rect x="240" y="187" width="1" height="78" fill="#00ffff"/><rect x="241" y="181" width="1" height="84" fill="#00ffff"/><rect x="242" y="187" width="1" height="78" fill="#00ffff"/><rect x="243" y="154" width="1" height="111" fill="#00ffff"/><rect x="244" y="204" width="1" height="61" fill="#00ffff"/><rect x="245" y="187" width="1" height="78" fill="#00ffff"/><rect x="246" y="181" width="1" height="84" fill="#00ffff"/><rect x="247" y="170" width="1" height="95" fill="#00ffff"/><rect x="248" y="181" width="1" height="84" fill="#00ffff"/><rect x="249" y="198" width="1" height="67" fill="#00ffff"/><rect x="250" y="181" width="1" height="84" fill="#00ffff"/><rect x="251" y="176" width="1" height="89" fill="#00ffff"/><rect x="252" y="192" width="1" height="73" fill="#00ffff"/><rect x="253" y="198" width="1" height="67" fill="#00ffff"/><rect x="254" y="181" width="1" height="84" fill="#00ffff"/><rect x="255" y="187" width="1" height="78" fill="#00ffff"/><rect x="256" y="181" width="1" height="84" fill="#00ffff"/><rect x="257" y="159" width="1" height="106" fill="#00ffff"/><rect x="258" y="192" width="2" height="73" fill="#00ffff"/><rect x="260" y="176" width="1" height="89" fill="#00ffff"/><rect x="261" y="187" width="1" height="78" fill="#00ffff"/><rect x="262" y="170" width="1" height="95" fill="#00ffff"/><rect x="263" y="181" width="2" height="84" fill="#00ffff"/><rect x="265" y="170" width="1" height="95" fill="#00ffff"/><rect x="266" y="181" width="1" height="84" fill="#00ffff"/><rect x="267" y="204" width="1" height="61" fill="#00ffff"/><rect x="268" y="148" width="1" height="117" fill="#00ffff"/><rect x="269" y="181" width="1" height="84" fill="#00ffff"/><rect x="270" y="176" width="1" height="89" fill="#00ffff"/><rect x="271" y="181" width="1" height="84" fill="#00ffff"/><rect x="272" y="192" width="1" height="73" fill="#00ffff"/><rect x="273" y="181" width="1" height="84" fill="#00ffff"/><rect x="274" y="176" width="1" height="89" fill="#00ffff"/><rect x="275" y="181" width="1" height="84" fill="#00ffff"/><rect x="276" y="192" width="1" height="73" fill="#00ffff"/><rect x="277" y="170" width="1" height="95" fill="#00ffff"/><rect x="278" y="181" width="1" height="84" fill="#00ffff"/><rect x="279" y="176" width="1" height="89" fill="#00ffff"/><rect x="280" y="170" width="1" height="95" fill="#00ffff"/><rect x="281" y="181" width="1" height="84" fill="#00ffff"/><rect x="282" y="170" width="1" height="95" fill="#00ffff"/><rect x="283" y="187" width="1" height="78" fill="#00ffff"/><rect x="284" y="192" width="1" height="73" fill="#00ffff"/><rect x="285" y="176" width="1" height="89" fill="#00ffff"/><rect x="286" y="170" width="1" height="95" fill="#00ffff"/><rect x="287" y="181" width="2" height="84" fill="#00ffff"/><rect x="289" y="187" width="1" height="78" fill="#00ffff"/><rect x="290" y="181" width="1" height="84" fill="#00ffff"/><rect x="291" y="187" width="1" height="78" fill="#00ffff"/><rect x="292" y="170" width="1" height="95" fill="#00ffff"/><rect x="293" y="159" width="1" height="106" fill="#00ffff"/><rect x="294" y="170" width="1" height="95" fill="#00ffff"/><rect x="295" y="165" width="2" height="100" fill="#00ffff"/><rect x="297" y="170" width="1" height="95" fill="#00ffff"/><rect x="298" y="187" width="1" height="78" fill="#00ffff"/><rect x="299" y="181" width="1" height="84" fill="#00ffff"/><rect x="300" y="176" width="3" height="89" fill="#00ffff"/><rect x="303" y="198" width="1" height="67" fill="#00ffff"/><rect x="304" y="187" width="1" height="78" fill="#00ffff"/><rect x="305" y="181" width="3" height="84" fill="#00ffff"/><rect x="308" y="176" width="2" height="89" fill="#00ffff"/><rect x="310" y="181" width="1" height="84" fill="#00ffff"/><rect x="311" y="187" width="1" height="78" fill="#00ffff"/><rect x="312" y="192" width="1" height="73" fill="#00ffff"/><rect x="313" y="187" width="1" height="78" fill="#00ffff"/><rect x="314" y="204" width="2" height="61" fill="#00ffff"/><rect x="316" y="187" width="1" height="78" fill="#00ffff"/><rect x="317" y="154" width="1" height="111" fill="#00ffff"/><rect x="318" y="187" width="1" height="78" fill="#00ffff"/><rect x="319" y="204" width="1" height="61" fill="#00ffff"/><rect x="320" y="181" width="2" height="84" fill="#00ffff"/><rect x="322" y="176" width="1" height="89" fill="#00ffff"/><rect x="323" y="181" width="2" height="84" fill="#00ffff"/><rect x="325" y="192" width="1" height="73" fill="#00ffff"/><rect x="326" y="154" width="1" height="111" fill="#00ffff"/><rect x="327" y="181" width="2" height="84" fill="#00ffff"/><rect x="329" y="176" width="1" height="89" fill="#00ffff"/><rect x="330" y="181" width="1" height="84" fill="#00ffff"/><rect x="331" y="176" width="1" height="89" fill="#00ffff"/><rect x="332" y="187" width="1" height="78" fill="#00ffff"/><rect x="333" y="192" width="1" height="73" fill="#00ffff"/><rect x="334" y="187" width="1" height="78" fill="#00ffff"/><rect x="335" y="170" width="1" height="95" fill="#00ffff"/><rect x="336" y="176" width="2" height="89" fill="#00ffff"/><rect x="338" y="198" width="1" height="67" fill="#00ffff"/><rect x="339" y="181" width="1" height="84" fill="#00ffff"/><rect x="340" y="192" width="1" height="73" fill="#00ffff"/><rect x="341" y="176" width="3" height="89" fill="#00ffff"/><rect x="344" y="187" width="1" height="78" fill="#00ffff"/><rect x="345" y="192" width="2" height="73" fill="#00ffff"/><rect x="347" y="187" width="1" height="78" fill="#00ffff"/><rect x="348" y="154" width="1" height="111" fill="#00ffff"/><rect x="349" y="192" width="1" height="73" fill="#00ffff"/><rect x="350" y="198" width="1" height="67" fill="#00ffff"/><rect x="351" y="187" width="1" height="78" fill="#00ffff"/><rect x="352" y="192" width="1" height="73" fill="#00ffff"/><rect x="353" y="181" width="1" height="84" fill="#00ffff"/><rect x="354" y="192" width="1" height="73" fill="#00ffff"/><rect x="355" y="198" width="1" height="67" fill="#00ffff"/><rect x="356" y="204" width="1" height="61" fill="#00ffff"/><rect x="357" y="176" width="5" height="89" fill="#00ffff"/><rect x="362" y="148" width="1" height="117" fill="#00ffff"/><rect x="363" y="170" width="1" height="95" fill="#00ffff"/><rect x="364" y="187" width="1" height="78" fill="#00ffff"/><rect x="365" y="176" width="1" height="89" fill="#00ffff"/><rect x="366" y="187" width="1" height="78" fill="#00ffff"/><rect x="367" y="198" width="1" height="67" fill="#00ffff"/><rect x="368" y="204" width="1" height="61" fill="#00ffff"/><rect x="369" y="165" width="1" height="100" fill="#00ffff"/><rect x="370" y="187" width="1" height="78" fill="#00ffff"/><rect x="371" y="159" width="1" height="106" fill="#00ffff"/><rect x="372" y="187" width="1" height="78" fill="#00ffff"/><rect x="373" y="204" width="1" height="61" fill="#00ffff"/><rect x="374" y="187" width="1" height="78" fill="#00ffff"/><rect x="375" y="181" width="1" height="84" fill="#00ffff"/><rect x="376" y="176" width="1" height="89" fill="#00ffff"/><rect x="377" y="187" width="1" height="78" fill="#00ffff"/><rect x="378" y="176" width="1" height="89" fill="#00ffff"/><rect x="379" y="204" width="1" height="61" fill="#00ffff"/><rect x="380" y="181" width="1" height="84" fill="#00ffff"/><rect x="381" y="187" width="1" height="78" fill="#00ffff"/><rect x="382" y="181" width="1" height="84" fill="#00ffff"/><rect x="383" y="176" width="1" height="89" fill="#00ffff"/><rect x="384" y="170" width="2" height="95" fill="#00ffff"/><rect x="386" y="187" width="1" height="78" fill="#00ffff"/><rect x="387" y="192" width="1" height="73" fill="#00ffff"/><rect x="388" y="181" width="1" height="84" fill="#00ffff"/><rect x="389" y="187" width="1" height="78" fill="#00ffff"/><rect x="390" y="176" width="1" height="89" fill="#00ffff"/><rect x="391" y="192" width="2" height="73" fill="#00ffff"/><rect x="393" y="181" width="1" height="84" fill="#00ffff"/><rect x="394" y="170" width="1" height="95" fill="#00ffff"/><rect x="395" y="198" width="1" height="67" fill="#00ffff"/><rect x="396" y="187" width="1" height="78" fill="#00ffff"/><rect x="397" y="192" width="1" height="73" fill="#00ffff"/><rect x="398" y="198" width="1" height="67" fill="#00ffff"/><rect x="399" y="204" width="1" height="61" fill="#00ffff"/><rect x="400" y="181" width="1" height="84" fill="#00ffff"/><rect x="401" y="204" width="1" height="61" fill="#00ffff"/><rect x="402" y="198" width="1" height="67" fill="#00ffff"/><rect x="403" y="192" width="2" height="73" fill="#00ffff"/><rect x="405" y="176" width="1" height="89" fill="#00ffff"/><rect x="406" y="187" width="1" height="78" fill="#00ffff"/><rect x="407" y="181" width="1" height="84" fill="#00ffff"/><rect x="408" y="209" width="1" height="56" fill="#00ffff"/><rect x="409" y="187" width="1" height="78" fill="#00ffff"/><rect x="410" y="192" width="1" height="73" fill="#00ffff"/><rect x="411" y="170" width="1" height="95" fill="#00ffff"/><rect x="412" y="187" width="1" height="78" fill="#00ffff"/><rect x="413" y="198" width="1" height="67" fill="#00ffff"/><rect x="414" y="176" width="1" height="89" fill="#00ffff"/><rect x="415" y="192" width="2" height="73" fill="#00ffff"/><rect x="417" y="176" width="1" height="89" fill="#00ffff"/><rect x="418" y="209" width="1" height="56" fill="#00ffff"/><rect x="419" y="204" width="1" height="61" fill="#00ffff"/><rect x="420" y="192" width="2" height="73" fill="#00ffff"/><rect x="422" y="187" width="3" height="78" fill="#00ffff"/><rect x="425" y="192" width="1" height="73" fill="#00ffff"/><rect x="426" y="209" width="1" height="56" fill="#00ffff"/><rect x="427" y="181" width="1" height="84" fill="#00ffff"/><rect x="428" y="198" width="1" height="67" fill="#00ffff"/><rect x="429" y="181" width="1" height="84" fill="#00ffff"/><rect x="430" y="198" width="3" height="67" fill="#00ffff"/><rect x="433" y="165" width="1" height="100" fill="#00ffff"/><rect x="434" y="198" width="1" height="67" fill="#00ffff"/><rect x="435" y="209" width="1" height="56" fill="#00ffff"/><rect x="436" y="181" width="1" height="84" fill="#00ffff"/><rect x="437" y="198" width="1" height="67" fill="#00ffff"/><rect x="48" y="230" width="390" height="1" fill="#00c800"/><rect x="48" y="230" width="1" height="6" fill="#00c000"/><rect x="60" y="230" width="2" height="15" fill="#00c000"/><rect x="60" y="230" width="1" height="31" fill="#00c000"/><rect x="72" y="230" width="2" height="15" fill="#00c000"/><rect x="72" y="230" width="1" height="31" fill="#00c000"/><rect x="73" y="229" width="1" height="1" fill="#00c000"/><rect x="466" y="264" width="4" height="1" fill="#0000ff"/><rect x="466" y="256" width="2" height="1" fill="#0000ff"/><rect x="466" y="248" width="4" height="1" fill="#0000ff"/><rect x="466" y="240" width="2" height="1" fill="#0000ff"/><rect x="466" y="231" width="4" height="1" fill="#0000ff"/><rect x="466" y="223" width="2" height="1" fill="#0000ff"/><rect x="466" y="215" width="4" height="1" fill="#0000ff"/><rect x="466" y="206" width="2" height="1" fill="#0000ff"/><rect x="466" y="198" width="4" height="1" fill="#0000ff"/><rect x="466" y="190" width="2" height="1" fill="#0000ff"/><rect x="466" y="181" width="4" height="1" fill="#0000ff"/><rect x="466" y="173" width="2" height="1" fill="#0000ff"/><rect x="466" y="165" width="4" height="1" fill="#0000ff"/><rect x="466" y="156" width="2" height="1" fill="#0000ff"/><rect x="466" y="148" width="4" height="1" fill="#0000ff"/><rect x="466" y="140" width="2" height="1" fill="#0000ff"/><rect x="466" y="131" width="4" height="1" fill="#0000ff"/><rect x="438" y="131" width="1" height="133" fill="#e0e0e0"/></svg>
<div class="t" style="right:603px;top:124px;font-size:12px;letter-spacing:-0.6px">24</div>
<div class="t" style="right:603px;top:136px;font-size:12px;letter-spacing:-0.6px">22</div>
<div class="t" style="right:603px;top:147px;font-size:12px;letter-spacing:-0.6px">20</div>
<div class="t" style="right:603px;top:158px;font-size:12px;letter-spacing:-0.6px">18</div>
<div class="t" style="right:603px;top:169px;font-size:12px;letter-spacing:-0.6px">16</div>
<div class="t" style="right:603px;top:180px;font-size:12px;letter-spacing:-0.6px">14</div>
<div class="t" style="right:603px;top:191px;font-size:12px;letter-spacing:-0.6px">12</div>
<div class="t" style="right:603px;top:202px;font-size:12px;letter-spacing:-0.6px">10</div>
<div class="t" style="right:603px;top:213px;font-size:12px;letter-spacing:-0.6px">8</div>
<div class="t" style="right:603px;top:224px;font-size:12px;letter-spacing:-0.6px">6</div>
<div class="t" style="right:603px;top:235px;font-size:12px;letter-spacing:-0.6px">4</div>
<div class="t" style="right:603px;top:246px;font-size:12px;letter-spacing:-0.6px">2</div>
<div class="t" style="left:470px;top:124px;font-size:12px;letter-spacing:-0.6px">16</div>
<div class="t" style="left:470px;top:141px;font-size:12px;letter-spacing:-0.6px">14</div>
<div class="t" style="left:470px;top:158px;font-size:12px;letter-spacing:-0.6px">12</div>
<div class="t" style="left:470px;top:174px;font-size:12px;letter-spacing:-0.6px">10</div>
<div class="t" style="left:470px;top:191px;font-size:12px;letter-spacing:-0.6px">8</div>
<div class="t" style="left:470px;top:208px;font-size:12px;letter-spacing:-0.6px">6</div>
<div class="t" style="left:470px;top:224px;font-size:12px;letter-spacing:-0.6px">4</div>
<div class="t" style="left:470px;top:241px;font-size:12px;letter-spacing:-0.6px">2</div>
<div class="t" style="left:34.5px;width:30px;text-align:center;top:268px;font-size:12px;letter-spacing:-0.6px">0.0</div>
<div class="t" style="left:80.94444444444444px;width:30px;text-align:center;top:268px;font-size:12px;letter-spacing:-0.6px">0.5</div>
<div class="t" style="left:127.38888888888889px;width:30px;text-align:center;top:268px;font-size:12px;letter-spacing:-0.6px">1.0</div>
<div class="t" style="left:173.83333333333334px;width:30px;text-align:center;top:268px;font-size:12px;letter-spacing:-0.6px">1.5</div>
<div class="t" style="left:220.27777777777777px;width:30px;text-align:center;top:268px;font-size:12px;letter-spacing:-0.6px">2.0</div>
<div class="t" style="left:266.72222222222223px;width:30px;text-align:center;top:268px;font-size:12px;letter-spacing:-0.6px">2.5</div>
<div class="t" style="left:313.1666666666667px;width:30px;text-align:center;top:268px;font-size:12px;letter-spacing:-0.6px">3.0</div>
<div class="t" style="left:359.6111111111111px;width:30px;text-align:center;top:268px;font-size:12px;letter-spacing:-0.6px">3.5</div>
<div class="t" style="left:406.05555555555554px;width:30px;text-align:center;top:268px;font-size:12px;letter-spacing:-0.6px">4.0</div>
<div class="t" style="left:452.5px;width:30px;text-align:center;top:268px;font-size:12px;letter-spacing:-0.6px">4.5</div>
<div class="t" style="right:190px;top:116px;font-size:12px;letter-spacing:-0.3px;transform:scaleX(0.925);transform-origin:right center">aufgenommen mit TOSHIBA DVD-ROM SD-R5002</div>
<svg style="left:0px;top:0px" width="645" height="523" viewBox="0 0 645 523" shape-rendering="crispEdges"><defs><linearGradient id="bg291" x1="0" y1="0" x2="0" y2="1"><stop offset="0" stop-color="#2a2a2a"/><stop offset="0.35" stop-color="#181818"/><stop offset="1" stop-color="#040404"/></linearGradient></defs><rect x="46" y="291" width="422" height="137" fill="#000"/><rect x="48" y="293" width="418" height="133" fill="url(#bg291)"/><rect x="45" y="426" width="421" height="1" fill="#0000ff"/><rect x="46" y="413" width="420" height="1" fill="#0000b0"/><rect x="45" y="400" width="421" height="1" fill="#0000ff"/><rect x="46" y="387" width="420" height="1" fill="#0000b0"/><rect x="45" y="373" width="421" height="1" fill="#0000ff"/><rect x="46" y="360" width="420" height="1" fill="#0000b0"/><rect x="45" y="347" width="421" height="1" fill="#0000ff"/><rect x="46" y="333" width="420" height="1" fill="#0000b0"/><rect x="45" y="320" width="421" height="1" fill="#0000ff"/><rect x="46" y="307" width="420" height="1" fill="#0000b0"/><rect x="45" y="293" width="421" height="1" fill="#0000ff"/><rect x="48" y="387" width="1" height="40" fill="#00ff00"/><rect x="49" y="400" width="1" height="27" fill="#00ff00"/><rect x="50" y="373" width="1" height="54" fill="#00ff00"/><rect x="51" y="400" width="1" height="27" fill="#00ff00"/><rect x="53" y="360" width="1" height="67" fill="#00ff00"/><rect x="55" y="413" width="2" height="14" fill="#00ff00"/><rect x="58" y="373" width="1" height="54" fill="#00ff00"/><rect x="59" y="400" width="1" height="27" fill="#00ff00"/><rect x="60" y="387" width="1" height="40" fill="#00ff00"/><rect x="61" y="360" width="1" height="67" fill="#00ff00"/><rect x="62" y="400" width="2" height="27" fill="#00ff00"/><rect x="64" y="387" width="1" height="40" fill="#00ff00"/><rect x="65" y="400" width="1" height="27" fill="#00ff00"/><rect x="66" y="387" width="1" height="40" fill="#00ff00"/><rect x="67" y="400" width="1" height="27" fill="#00ff00"/><rect x="68" y="387" width="1" height="40" fill="#00ff00"/><rect x="69" y="413" width="3" height="14" fill="#00ff00"/><rect x="72" y="360" width="1" height="67" fill="#00ff00"/><rect x="73" y="387" width="2" height="40" fill="#00ff00"/><rect x="75" y="373" width="1" height="54" fill="#00ff00"/><rect x="76" y="400" width="2" height="27" fill="#00ff00"/><rect x="78" y="373" width="4" height="54" fill="#00ff00"/><rect x="82" y="400" width="1" height="27" fill="#00ff00"/><rect x="83" y="413" width="1" height="14" fill="#00ff00"/><rect x="84" y="400" width="2" height="27" fill="#00ff00"/><rect x="87" y="373" width="1" height="54" fill="#00ff00"/><rect x="88" y="387" width="1" height="40" fill="#00ff00"/><rect x="89" y="413" width="2" height="14" fill="#00ff00"/><rect x="91" y="400" width="1" height="27" fill="#00ff00"/><rect x="92" y="413" width="1" height="14" fill="#00ff00"/><rect x="93" y="400" width="2" height="27" fill="#00ff00"/><rect x="95" y="413" width="1" height="14" fill="#00ff00"/><rect x="96" y="400" width="1" height="27" fill="#00ff00"/><rect x="97" y="373" width="1" height="54" fill="#00ff00"/><rect x="98" y="400" width="1" height="27" fill="#00ff00"/><rect x="99" y="387" width="3" height="40" fill="#00ff00"/><rect x="102" y="360" width="1" height="67" fill="#00ff00"/><rect x="103" y="387" width="2" height="40" fill="#00ff00"/><rect x="105" y="400" width="1" height="27" fill="#00ff00"/><rect x="106" y="373" width="1" height="54" fill="#00ff00"/><rect x="107" y="387" width="1" height="40" fill="#00ff00"/><rect x="108" y="413" width="1" height="14" fill="#00ff00"/><rect x="110" y="413" width="1" height="14" fill="#00ff00"/><rect x="111" y="387" width="1" height="40" fill="#00ff00"/><rect x="112" y="413" width="1" height="14" fill="#00ff00"/><rect x="113" y="373" width="1" height="54" fill="#00ff00"/><rect x="114" y="387" width="1" height="40" fill="#00ff00"/><rect x="115" y="400" width="2" height="27" fill="#00ff00"/><rect x="117" y="413" width="1" height="14" fill="#00ff00"/><rect x="118" y="400" width="1" height="27" fill="#00ff00"/><rect x="119" y="413" width="1" height="14" fill="#00ff00"/><rect x="120" y="387" width="1" height="40" fill="#00ff00"/><rect x="121" y="413" width="1" height="14" fill="#00ff00"/><rect x="122" y="400" width="1" height="27" fill="#00ff00"/><rect x="123" y="387" width="1" height="40" fill="#00ff00"/><rect x="124" y="413" width="1" height="14" fill="#00ff00"/><rect x="126" y="413" width="1" height="14" fill="#00ff00"/><rect x="128" y="413" width="1" height="14" fill="#00ff00"/><rect x="129" y="400" width="2" height="27" fill="#00ff00"/><rect x="131" y="373" width="1" height="54" fill="#00ff00"/><rect x="132" y="400" width="1" height="27" fill="#00ff00"/><rect x="133" y="387" width="1" height="40" fill="#00ff00"/><rect x="134" y="373" width="2" height="54" fill="#00ff00"/><rect x="136" y="387" width="1" height="40" fill="#00ff00"/><rect x="137" y="400" width="1" height="27" fill="#00ff00"/><rect x="138" y="413" width="2" height="14" fill="#00ff00"/><rect x="140" y="400" width="1" height="27" fill="#00ff00"/><rect x="142" y="400" width="1" height="27" fill="#00ff00"/><rect x="143" y="387" width="3" height="40" fill="#00ff00"/><rect x="147" y="387" width="1" height="40" fill="#00ff00"/><rect x="149" y="387" width="1" height="40" fill="#00ff00"/><rect x="150" y="400" width="2" height="27" fill="#00ff00"/><rect x="152" y="413" width="1" height="14" fill="#00ff00"/><rect x="153" y="387" width="4" height="40" fill="#00ff00"/><rect x="157" y="400" width="1" height="27" fill="#00ff00"/><rect x="158" y="387" width="2" height="40" fill="#00ff00"/><rect x="160" y="413" width="1" height="14" fill="#00ff00"/><rect x="161" y="387" width="1" height="40" fill="#00ff00"/><rect x="162" y="413" width="1" height="14" fill="#00ff00"/><rect x="163" y="387" width="1" height="40" fill="#00ff00"/><rect x="164" y="373" width="1" height="54" fill="#00ff00"/><rect x="165" y="400" width="1" height="27" fill="#00ff00"/><rect x="166" y="387" width="2" height="40" fill="#00ff00"/><rect x="168" y="373" width="2" height="54" fill="#00ff00"/><rect x="170" y="387" width="1" height="40" fill="#00ff00"/><rect x="171" y="373" width="1" height="54" fill="#00ff00"/><rect x="172" y="400" width="1" height="27" fill="#00ff00"/><rect x="173" y="387" width="4" height="40" fill="#00ff00"/><rect x="177" y="373" width="1" height="54" fill="#00ff00"/><rect x="178" y="387" width="10" height="40" fill="#00ff00"/><rect x="188" y="413" width="1" height="14" fill="#00ff00"/><rect x="189" y="387" width="3" height="40" fill="#00ff00"/><rect x="192" y="400" width="1" height="27" fill="#00ff00"/><rect x="193" y="387" width="2" height="40" fill="#00ff00"/><rect x="195" y="373" width="1" height="54" fill="#00ff00"/><rect x="196" y="360" width="1" height="67" fill="#00ff00"/><rect x="197" y="413" width="1" height="14" fill="#00ff00"/><rect x="198" y="387" width="1" height="40" fill="#00ff00"/><rect x="199" y="373" width="1" height="54" fill="#00ff00"/><rect x="200" y="387" width="1" height="40" fill="#00ff00"/><rect x="201" y="400" width="1" height="27" fill="#00ff00"/><rect x="202" y="387" width="7" height="40" fill="#00ff00"/><rect x="209" y="400" width="1" height="27" fill="#00ff00"/><rect x="210" y="387" width="3" height="40" fill="#00ff00"/><rect x="213" y="373" width="1" height="54" fill="#00ff00"/><rect x="214" y="387" width="3" height="40" fill="#00ff00"/><rect x="217" y="413" width="1" height="14" fill="#00ff00"/><rect x="218" y="387" width="1" height="40" fill="#00ff00"/><rect x="219" y="400" width="1" height="27" fill="#00ff00"/><rect x="220" y="387" width="1" height="40" fill="#00ff00"/><rect x="221" y="400" width="1" height="27" fill="#00ff00"/><rect x="222" y="387" width="1" height="40" fill="#00ff00"/><rect x="223" y="413" width="1" height="14" fill="#00ff00"/><rect x="224" y="387" width="1" height="40" fill="#00ff00"/><rect x="225" y="400" width="1" height="27" fill="#00ff00"/><rect x="226" y="387" width="2" height="40" fill="#00ff00"/><rect x="228" y="400" width="1" height="27" fill="#00ff00"/><rect x="229" y="387" width="1" height="40" fill="#00ff00"/><rect x="230" y="400" width="1" height="27" fill="#00ff00"/><rect x="231" y="387" width="1" height="40" fill="#00ff00"/><rect x="232" y="360" width="1" height="67" fill="#00ff00"/><rect x="233" y="373" width="1" height="54" fill="#00ff00"/><rect x="234" y="387" width="2" height="40" fill="#00ff00"/><rect x="236" y="400" width="1" height="27" fill="#00ff00"/><rect x="237" y="387" width="4" height="40" fill="#00ff00"/><rect x="241" y="400" width="1" height="27" fill="#00ff00"/><rect x="242" y="413" width="1" height="14" fill="#00ff00"/><rect x="243" y="400" width="3" height="27" fill="#00ff00"/><rect x="246" y="387" width="2" height="40" fill="#00ff00"/><rect x="248" y="400" width="1" height="27" fill="#00ff00"/><rect x="249" y="413" width="1" height="14" fill="#00ff00"/><rect x="250" y="400" width="1" height="27" fill="#00ff00"/><rect x="251" y="387" width="1" height="40" fill="#00ff00"/><rect x="252" y="373" width="1" height="54" fill="#00ff00"/><rect x="253" y="387" width="1" height="40" fill="#00ff00"/><rect x="255" y="387" width="1" height="40" fill="#00ff00"/><rect x="256" y="360" width="1" height="67" fill="#00ff00"/><rect x="257" y="387" width="1" height="40" fill="#00ff00"/><rect x="258" y="413" width="2" height="14" fill="#00ff00"/><rect x="260" y="387" width="1" height="40" fill="#00ff00"/><rect x="261" y="400" width="1" height="27" fill="#00ff00"/><rect x="262" y="387" width="5" height="40" fill="#00ff00"/><rect x="267" y="373" width="1" height="54" fill="#00ff00"/><rect x="268" y="387" width="1" height="40" fill="#00ff00"/><rect x="269" y="400" width="1" height="27" fill="#00ff00"/><rect x="270" y="413" width="1" height="14" fill="#00ff00"/><rect x="271" y="373" width="2" height="54" fill="#00ff00"/><rect x="273" y="400" width="1" height="27" fill="#00ff00"/><rect x="274" y="387" width="2" height="40" fill="#00ff00"/><rect x="276" y="400" width="1" height="27" fill="#00ff00"/><rect x="277" y="387" width="1" height="40" fill="#00ff00"/><rect x="278" y="373" width="1" height="54" fill="#00ff00"/><rect x="279" y="360" width="1" height="67" fill="#00ff00"/><rect x="280" y="387" width="2" height="40" fill="#00ff00"/><rect x="282" y="400" width="1" height="27" fill="#00ff00"/><rect x="283" y="387" width="1" height="40" fill="#00ff00"/><rect x="284" y="360" width="1" height="67" fill="#00ff00"/><rect x="285" y="387" width="7" height="40" fill="#00ff00"/><rect x="292" y="413" width="1" height="14" fill="#00ff00"/><rect x="293" y="387" width="1" height="40" fill="#00ff00"/><rect x="294" y="400" width="1" height="27" fill="#00ff00"/><rect x="295" y="387" width="1" height="40" fill="#00ff00"/><rect x="296" y="400" width="1" height="27" fill="#00ff00"/><rect x="297" y="373" width="1" height="54" fill="#00ff00"/><rect x="298" y="400" width="1" height="27" fill="#00ff00"/><rect x="299" y="413" width="1" height="14" fill="#00ff00"/><rect x="300" y="387" width="1" height="40" fill="#00ff00"/><rect x="301" y="360" width="1" height="67" fill="#00ff00"/><rect x="302" y="400" width="2" height="27" fill="#00ff00"/><rect x="304" y="387" width="2" height="40" fill="#00ff00"/><rect x="306" y="373" width="1" height="54" fill="#00ff00"/><rect x="307" y="387" width="1" height="40" fill="#00ff00"/><rect x="308" y="373" width="1" height="54" fill="#00ff00"/><rect x="309" y="387" width="2" height="40" fill="#00ff00"/><rect x="311" y="400" width="1" height="27" fill="#00ff00"/><rect x="312" y="387" width="2" height="40" fill="#00ff00"/><rect x="314" y="400" width="1" height="27" fill="#00ff00"/><rect x="315" y="387" width="1" height="40" fill="#00ff00"/><rect x="316" y="413" width="1" height="14" fill="#00ff00"/><rect x="317" y="387" width="1" height="40" fill="#00ff00"/><rect x="318" y="373" width="1" height="54" fill="#00ff00"/><rect x="320" y="400" width="2" height="27" fill="#00ff00"/><rect x="322" y="373" width="1" height="54" fill="#00ff00"/><rect x="323" y="387" width="1" height="40" fill="#00ff00"/><rect x="325" y="373" width="1" height="54" fill="#00ff00"/><rect x="326" y="320" width="2" height="107" fill="#00ff00"/><rect x="328" y="347" width="1" height="80" fill="#00ff00"/><rect x="329" y="373" width="1" height="54" fill="#00ff00"/><rect x="330" y="387" width="1" height="40" fill="#00ff00"/><rect x="331" y="400" width="2" height="27" fill="#00ff00"/><rect x="333" y="387" width="4" height="40" fill="#00ff00"/><rect x="337" y="400" width="4" height="27" fill="#00ff00"/><rect x="341" y="387" width="1" height="40" fill="#00ff00"/><rect x="342" y="400" width="1" height="27" fill="#00ff00"/><rect x="343" y="360" width="1" height="67" fill="#00ff00"/><rect x="344" y="400" width="5" height="27" fill="#00ff00"/><rect x="350" y="400" width="1" height="27" fill="#00ff00"/><rect x="351" y="373" width="1" height="54" fill="#00ff00"/><rect x="352" y="400" width="1" height="27" fill="#00ff00"/><rect x="353" y="373" width="1" height="54" fill="#00ff00"/><rect x="354" y="400" width="1" height="27" fill="#00ff00"/><rect x="355" y="387" width="1" height="40" fill="#00ff00"/><rect x="356" y="400" width="2" height="27" fill="#00ff00"/><rect x="358" y="387" width="3" height="40" fill="#00ff00"/><rect x="361" y="333" width="1" height="94" fill="#00ff00"/><rect x="362" y="347" width="2" height="80" fill="#00ff00"/><rect x="364" y="360" width="1" height="67" fill="#00ff00"/><rect x="365" y="387" width="1" height="40" fill="#00ff00"/><rect x="366" y="360" width="1" height="67" fill="#00ff00"/><rect x="367" y="400" width="1" height="27" fill="#00ff00"/><rect x="368" y="387" width="1" height="40" fill="#00ff00"/><rect x="369" y="400" width="1" height="27" fill="#00ff00"/><rect x="370" y="373" width="1" height="54" fill="#00ff00"/><rect x="371" y="387" width="2" height="40" fill="#00ff00"/><rect x="373" y="360" width="1" height="67" fill="#00ff00"/><rect x="374" y="400" width="1" height="27" fill="#00ff00"/><rect x="375" y="373" width="1" height="54" fill="#00ff00"/><rect x="376" y="387" width="1" height="40" fill="#00ff00"/><rect x="377" y="360" width="1" height="67" fill="#00ff00"/><rect x="378" y="387" width="2" height="40" fill="#00ff00"/><rect x="380" y="360" width="1" height="67" fill="#00ff00"/><rect x="381" y="400" width="1" height="27" fill="#00ff00"/><rect x="382" y="387" width="1" height="40" fill="#00ff00"/><rect x="383" y="373" width="1" height="54" fill="#00ff00"/><rect x="384" y="387" width="2" height="40" fill="#00ff00"/><rect x="386" y="400" width="1" height="27" fill="#00ff00"/><rect x="387" y="387" width="2" height="40" fill="#00ff00"/><rect x="389" y="373" width="1" height="54" fill="#00ff00"/><rect x="390" y="387" width="2" height="40" fill="#00ff00"/><rect x="392" y="373" width="1" height="54" fill="#00ff00"/><rect x="393" y="387" width="1" height="40" fill="#00ff00"/><rect x="394" y="400" width="1" height="27" fill="#00ff00"/><rect x="395" y="387" width="1" height="40" fill="#00ff00"/><rect x="396" y="373" width="1" height="54" fill="#00ff00"/><rect x="397" y="387" width="1" height="40" fill="#00ff00"/><rect x="398" y="400" width="1" height="27" fill="#00ff00"/><rect x="399" y="387" width="2" height="40" fill="#00ff00"/><rect x="401" y="373" width="1" height="54" fill="#00ff00"/><rect x="402" y="387" width="1" height="40" fill="#00ff00"/><rect x="403" y="400" width="1" height="27" fill="#00ff00"/><rect x="404" y="387" width="2" height="40" fill="#00ff00"/><rect x="406" y="373" width="1" height="54" fill="#00ff00"/><rect x="407" y="400" width="2" height="27" fill="#00ff00"/><rect x="409" y="387" width="1" height="40" fill="#00ff00"/><rect x="410" y="413" width="1" height="14" fill="#00ff00"/><rect x="411" y="387" width="1" height="40" fill="#00ff00"/><rect x="412" y="373" width="1" height="54" fill="#00ff00"/><rect x="413" y="400" width="7" height="27" fill="#00ff00"/><rect x="420" y="387" width="1" height="40" fill="#00ff00"/><rect x="421" y="360" width="1" height="67" fill="#00ff00"/><rect x="422" y="400" width="1" height="27" fill="#00ff00"/><rect x="423" y="387" width="1" height="40" fill="#00ff00"/><rect x="424" y="400" width="1" height="27" fill="#00ff00"/><rect x="425" y="387" width="1" height="40" fill="#00ff00"/><rect x="426" y="400" width="1" height="27" fill="#00ff00"/><rect x="427" y="387" width="1" height="40" fill="#00ff00"/><rect x="428" y="360" width="1" height="67" fill="#00ff00"/><rect x="429" y="413" width="1" height="14" fill="#00ff00"/><rect x="430" y="387" width="1" height="40" fill="#00ff00"/><rect x="431" y="400" width="1" height="27" fill="#00ff00"/><rect x="432" y="387" width="1" height="40" fill="#00ff00"/><rect x="433" y="400" width="1" height="27" fill="#00ff00"/><rect x="434" y="360" width="4" height="67" fill="#00ff00"/><g fill="#ff00ff"><rect x="48" y="357" width="1" height="2"/><rect x="49" y="357" width="1" height="2"/><rect x="50" y="352" width="1" height="7"/><rect x="51" y="352" width="1" height="11"/><rect x="52" y="355" width="1" height="8"/><rect x="53" y="355" width="1" height="8"/><rect x="54" y="351" width="1" height="12"/><rect x="55" y="351" width="1" height="4"/><rect x="56" y="349" width="1" height="6"/><rect x="57" y="349" width="1" height="8"/><rect x="58" y="352" width="1" height="5"/><rect x="59" y="352" width="1" height="4"/><rect x="60" y="354" width="1" height="4"/><rect x="61" y="353" width="1" height="5"/><rect x="62" y="353" width="1" height="6"/><rect x="63" y="355" width="1" height="4"/><rect x="64" y="351" width="1" height="6"/><rect x="65" y="351" width="1" height="4"/><rect x="66" y="353" width="1" height="4"/><rect x="67" y="347" width="1" height="10"/><rect x="68" y="347" width="1" height="8"/><rect x="69" y="353" width="1" height="4"/><rect x="70" y="353" width="1" height="4"/><rect x="71" y="353" width="1" height="4"/><rect x="72" y="355" width="1" height="2"/><rect x="73" y="355" width="1" height="2"/><rect x="74" y="347" width="1" height="10"/><rect x="75" y="347" width="1" height="8"/><rect x="76" y="353" width="1" height="2"/><rect x="77" y="351" width="1" height="4"/><rect x="78" y="347" width="1" height="6"/><rect x="79" y="347" width="1" height="8"/><rect x="80" y="353" width="1" height="4"/><rect x="81" y="346" width="1" height="11"/><rect x="82" y="346" width="1" height="13"/><rect x="83" y="355" width="1" height="4"/><rect x="84" y="351" width="1" height="6"/><rect x="85" y="346" width="1" height="7"/><rect x="86" y="346" width="1" height="12"/><rect x="87" y="356" width="1" height="7"/><rect x="88" y="352" width="1" height="11"/><rect x="89" y="352" width="1" height="5"/><rect x="90" y="355" width="1" height="2"/><rect x="91" y="352" width="1" height="5"/><rect x="92" y="352" width="1" height="3"/><rect x="93" y="352" width="1" height="3"/><rect x="94" y="352" width="1" height="5"/><rect x="95" y="349" width="1" height="8"/><rect x="96" y="348" width="1" height="3"/><rect x="97" y="348" width="1" height="7"/><rect x="98" y="353" width="1" height="4"/><rect x="99" y="351" width="1" height="6"/><rect x="100" y="351" width="1" height="3"/><rect x="101" y="352" width="1" height="7"/><rect x="102" y="355" width="1" height="4"/><rect x="103" y="350" width="1" height="7"/><rect x="104" y="350" width="1" height="5"/><rect x="105" y="353" width="1" height="3"/><rect x="106" y="353" width="1" height="3"/><rect x="107" y="353" width="1" height="2"/><rect x="108" y="353" width="1" height="2"/><rect x="109" y="353" width="1" height="9"/><rect x="110" y="348" width="1" height="14"/><rect x="111" y="348" width="1" height="6"/><rect x="112" y="352" width="1" height="6"/><rect x="113" y="351" width="1" height="7"/><rect x="114" y="351" width="1" height="3"/><rect x="115" y="352" width="1" height="3"/><rect x="116" y="350" width="1" height="5"/><rect x="117" y="346" width="1" height="6"/><rect x="118" y="346" width="1" height="7"/><rect x="119" y="348" width="1" height="5"/><rect x="120" y="346" width="1" height="4"/><rect x="121" y="346" width="1" height="12"/><rect x="122" y="355" width="1" height="3"/><rect x="123" y="351" width="1" height="6"/><rect x="124" y="351" width="1" height="10"/><rect x="125" y="355" width="1" height="6"/><rect x="126" y="349" width="1" height="8"/><rect x="127" y="349" width="1" height="3"/><rect x="128" y="350" width="1" height="3"/><rect x="129" y="351" width="1" height="10"/><rect x="130" y="347" width="1" height="14"/><rect x="131" y="347" width="1" height="6"/><rect x="132" y="351" width="1" height="2"/><rect x="133" y="351" width="1" height="3"/><rect x="134" y="352" width="1" height="9"/><rect x="135" y="359" width="1" height="2"/><rect x="136" y="358" width="1" height="3"/><rect x="137" y="348" width="1" height="12"/><rect x="138" y="348" width="1" height="10"/><rect x="139" y="354" width="1" height="4"/><rect x="140" y="354" width="1" height="2"/><rect x="141" y="352" width="1" height="4"/><rect x="142" y="352" width="1" height="2"/><rect x="143" y="352" width="1" height="2"/><rect x="144" y="352" width="1" height="7"/><rect x="145" y="357" width="1" height="9"/><rect x="146" y="354" width="1" height="12"/><rect x="147" y="353" width="1" height="3"/><rect x="148" y="349" width="1" height="6"/><rect x="149" y="349" width="1" height="6"/><rect x="150" y="353" width="1" height="4"/><rect x="151" y="352" width="1" height="5"/><rect x="152" y="352" width="1" height="8"/><rect x="153" y="357" width="1" height="3"/><rect x="154" y="357" width="1" height="2"/><rect x="155" y="353" width="1" height="6"/><rect x="156" y="347" width="1" height="8"/><rect x="157" y="347" width="1" height="5"/><rect x="158" y="349" width="1" height="3"/><rect x="159" y="349" width="1" height="5"/><rect x="160" y="352" width="1" height="2"/><rect x="161" y="352" width="1" height="5"/><rect x="162" y="354" width="1" height="3"/><rect x="163" y="354" width="1" height="9"/><rect x="164" y="358" width="1" height="5"/><rect x="165" y="358" width="1" height="2"/><rect x="166" y="351" width="1" height="9"/><rect x="167" y="351" width="1" height="2"/><rect x="168" y="350" width="1" height="3"/><rect x="169" y="348" width="1" height="4"/><rect x="170" y="348" width="1" height="8"/><rect x="171" y="350" width="1" height="6"/><rect x="172" y="347" width="1" height="5"/><rect x="173" y="347" width="1" height="8"/><rect x="174" y="350" width="1" height="5"/><rect x="175" y="350" width="1" height="6"/><rect x="176" y="354" width="1" height="7"/><rect x="177" y="354" width="1" height="7"/><rect x="178" y="354" width="1" height="4"/><rect x="179" y="353" width="1" height="5"/><rect x="180" y="353" width="1" height="4"/><rect x="181" y="353" width="1" height="4"/><rect x="182" y="353" width="1" height="9"/><rect x="183" y="347" width="1" height="15"/><rect x="184" y="347" width="1" height="4"/><rect x="185" y="349" width="1" height="7"/><rect x="186" y="354" width="1" height="4"/><rect x="187" y="354" width="1" height="4"/><rect x="188" y="351" width="1" height="5"/><rect x="189" y="351" width="1" height="3"/><rect x="190" y="352" width="1" height="2"/><rect x="191" y="352" width="1" height="10"/><rect x="192" y="358" width="1" height="4"/><rect x="193" y="350" width="1" height="10"/><rect x="194" y="350" width="1" height="4"/><rect x="195" y="352" width="1" height="8"/><rect x="196" y="357" width="1" height="3"/><rect x="197" y="357" width="1" height="3"/><rect x="198" y="357" width="1" height="3"/><rect x="199" y="350" width="1" height="9"/><rect x="200" y="350" width="1" height="6"/><rect x="201" y="350" width="1" height="6"/><rect x="202" y="350" width="1" height="4"/><rect x="203" y="352" width="1" height="8"/><rect x="204" y="356" width="1" height="4"/><rect x="205" y="346" width="1" height="12"/><rect x="206" y="346" width="1" height="11"/><rect x="207" y="355" width="1" height="4"/><rect x="208" y="350" width="1" height="9"/><rect x="209" y="350" width="1" height="5"/><rect x="210" y="353" width="1" height="2"/><rect x="211" y="349" width="1" height="6"/><rect x="212" y="349" width="1" height="12"/><rect x="213" y="353" width="1" height="8"/><rect x="214" y="353" width="1" height="6"/><rect x="215" y="357" width="1" height="3"/><rect x="216" y="357" width="1" height="3"/><rect x="217" y="350" width="1" height="9"/><rect x="218" y="350" width="1" height="6"/><rect x="219" y="354" width="1" height="7"/><rect x="220" y="358" width="1" height="3"/><rect x="221" y="349" width="1" height="11"/><rect x="222" y="349" width="1" height="3"/><rect x="223" y="350" width="1" height="9"/><rect x="224" y="346" width="1" height="13"/><rect x="225" y="346" width="1" height="10"/><rect x="226" y="354" width="1" height="5"/><rect x="227" y="354" width="1" height="5"/><rect x="228" y="350" width="1" height="6"/><rect x="229" y="348" width="1" height="4"/><rect x="230" y="348" width="1" height="4"/><rect x="231" y="350" width="1" height="6"/><rect x="232" y="354" width="1" height="3"/><rect x="233" y="355" width="1" height="5"/><rect x="234" y="354" width="1" height="6"/><rect x="235" y="354" width="1" height="3"/><rect x="236" y="353" width="1" height="4"/><rect x="237" y="353" width="1" height="7"/><rect x="238" y="356" width="1" height="4"/><rect x="239" y="356" width="1" height="3"/><rect x="240" y="357" width="1" height="3"/><rect x="241" y="358" width="1" height="2"/><rect x="242" y="357" width="1" height="3"/><rect x="243" y="357" width="1" height="3"/><rect x="244" y="352" width="1" height="8"/><rect x="245" y="352" width="1" height="3"/><rect x="246" y="353" width="1" height="7"/><rect x="247" y="352" width="1" height="8"/><rect x="248" y="352" width="1" height="2"/><rect x="249" y="349" width="1" height="5"/><rect x="250" y="349" width="1" height="7"/><rect x="251" y="354" width="1" height="2"/><rect x="252" y="354" width="1" height="4"/><rect x="253" y="353" width="1" height="5"/><rect x="254" y="352" width="1" height="3"/><rect x="255" y="352" width="1" height="3"/><rect x="256" y="353" width="1" height="3"/><rect x="257" y="352" width="1" height="4"/><rect x="258" y="352" width="1" height="3"/><rect x="259" y="353" width="1" height="2"/><rect x="260" y="353" width="1" height="5"/><rect x="261" y="353" width="1" height="5"/><rect x="262" y="353" width="1" height="6"/><rect x="263" y="357" width="1" height="2"/><rect x="264" y="353" width="1" height="6"/><rect x="265" y="347" width="1" height="8"/><rect x="266" y="347" width="1" height="5"/><rect x="267" y="350" width="1" height="5"/><rect x="268" y="353" width="1" height="3"/><rect x="269" y="350" width="1" height="6"/><rect x="270" y="349" width="1" height="3"/><rect x="271" y="349" width="1" height="2"/><rect x="272" y="349" width="1" height="7"/><rect x="273" y="353" width="1" height="3"/><rect x="274" y="353" width="1" height="3"/><rect x="275" y="354" width="1" height="2"/><rect x="276" y="354" width="1" height="4"/><rect x="277" y="355" width="1" height="3"/><rect x="278" y="355" width="1" height="8"/><rect x="279" y="358" width="1" height="5"/><rect x="280" y="353" width="1" height="7"/><rect x="281" y="353" width="1" height="5"/><rect x="282" y="352" width="1" height="6"/><rect x="283" y="352" width="1" height="8"/><rect x="284" y="355" width="1" height="5"/><rect x="285" y="352" width="1" height="5"/><rect x="286" y="352" width="1" height="7"/><rect x="287" y="356" width="1" height="3"/><rect x="288" y="346" width="1" height="12"/><rect x="289" y="346" width="1" height="11"/><rect x="290" y="355" width="1" height="3"/><rect x="291" y="356" width="1" height="2"/><rect x="292" y="354" width="1" height="4"/><rect x="293" y="354" width="1" height="2"/><rect x="294" y="350" width="1" height="6"/><rect x="295" y="350" width="1" height="3"/><rect x="296" y="351" width="1" height="5"/><rect x="297" y="354" width="1" height="3"/><rect x="298" y="355" width="1" height="5"/><rect x="299" y="358" width="1" height="3"/><rect x="300" y="356" width="1" height="5"/><rect x="301" y="351" width="1" height="7"/><rect x="302" y="351" width="1" height="4"/><rect x="303" y="351" width="1" height="4"/><rect x="304" y="350" width="1" height="3"/><rect x="305" y="350" width="1" height="6"/><rect x="306" y="347" width="1" height="9"/><rect x="307" y="347" width="1" height="9"/><rect x="308" y="354" width="1" height="4"/><rect x="309" y="355" width="1" height="3"/><rect x="310" y="350" width="1" height="7"/><rect x="311" y="350" width="1" height="6"/><rect x="312" y="354" width="1" height="4"/><rect x="313" y="352" width="1" height="6"/><rect x="314" y="350" width="1" height="4"/><rect x="315" y="350" width="1" height="5"/><rect x="316" y="353" width="1" height="3"/><rect x="317" y="350" width="1" height="6"/><rect x="318" y="350" width="1" height="2"/><rect x="319" y="350" width="1" height="2"/><rect x="320" y="350" width="1" height="8"/><rect x="321" y="353" width="1" height="5"/><rect x="322" y="352" width="1" height="3"/><rect x="323" y="352" width="1" height="9"/><rect x="324" y="350" width="1" height="11"/><rect x="325" y="350" width="1" height="5"/><rect x="326" y="353" width="1" height="3"/><rect x="327" y="346" width="1" height="10"/><rect x="328" y="346" width="1" height="8"/><rect x="329" y="352" width="1" height="6"/><rect x="330" y="354" width="1" height="4"/><rect x="331" y="352" width="1" height="4"/><rect x="332" y="351" width="1" height="3"/><rect x="333" y="351" width="1" height="4"/><rect x="334" y="353" width="1" height="5"/><rect x="335" y="356" width="1" height="2"/><rect x="336" y="356" width="1" height="2"/><rect x="337" y="356" width="1" height="3"/><rect x="338" y="354" width="1" height="5"/><rect x="339" y="354" width="1" height="3"/><rect x="340" y="353" width="1" height="4"/><rect x="341" y="353" width="1" height="5"/><rect x="342" y="356" width="1" height="3"/><rect x="343" y="354" width="1" height="5"/><rect x="344" y="354" width="1" height="3"/><rect x="345" y="350" width="1" height="7"/><rect x="346" y="350" width="1" height="8"/><rect x="347" y="353" width="1" height="5"/><rect x="348" y="353" width="1" height="3"/><rect x="349" y="354" width="1" height="6"/><rect x="350" y="352" width="1" height="8"/><rect x="351" y="352" width="1" height="3"/><rect x="352" y="353" width="1" height="9"/><rect x="353" y="352" width="1" height="10"/><rect x="354" y="350" width="1" height="4"/><rect x="355" y="350" width="1" height="8"/><rect x="356" y="348" width="1" height="10"/><rect x="357" y="348" width="1" height="6"/><rect x="358" y="352" width="1" height="7"/><rect x="359" y="352" width="1" height="7"/><rect x="360" y="352" width="1" height="4"/><rect x="361" y="354" width="1" height="6"/><rect x="362" y="358" width="1" height="5"/><rect x="363" y="353" width="1" height="10"/><rect x="364" y="353" width="1" height="5"/><rect x="365" y="352" width="1" height="6"/><rect x="366" y="352" width="1" height="2"/><rect x="367" y="352" width="1" height="5"/><rect x="368" y="355" width="1" height="2"/><rect x="369" y="348" width="1" height="9"/><rect x="370" y="347" width="1" height="3"/><rect x="371" y="347" width="1" height="5"/><rect x="372" y="350" width="1" height="6"/><rect x="373" y="354" width="1" height="5"/><rect x="374" y="355" width="1" height="4"/><rect x="375" y="348" width="1" height="9"/><rect x="376" y="348" width="1" height="5"/><rect x="377" y="351" width="1" height="5"/><rect x="378" y="354" width="1" height="6"/><rect x="379" y="353" width="1" height="7"/><rect x="380" y="353" width="1" height="5"/><rect x="381" y="354" width="1" height="4"/><rect x="382" y="351" width="1" height="5"/><rect x="383" y="350" width="1" height="3"/><rect x="384" y="350" width="1" height="5"/><rect x="385" y="353" width="1" height="3"/><rect x="386" y="353" width="1" height="3"/><rect x="387" y="348" width="1" height="7"/><rect x="388" y="348" width="1" height="6"/><rect x="389" y="352" width="1" height="8"/><rect x="390" y="349" width="1" height="11"/><rect x="391" y="349" width="1" height="5"/><rect x="392" y="342" width="1" height="12"/><rect x="393" y="342" width="1" height="14"/><rect x="394" y="354" width="1" height="2"/><rect x="395" y="354" width="1" height="2"/><rect x="396" y="352" width="1" height="4"/><rect x="397" y="352" width="1" height="5"/><rect x="398" y="355" width="1" height="5"/><rect x="399" y="358" width="1" height="4"/><rect x="400" y="355" width="1" height="7"/><rect x="401" y="355" width="1" height="2"/><rect x="402" y="355" width="1" height="3"/><rect x="403" y="347" width="1" height="11"/><rect x="404" y="347" width="1" height="5"/><rect x="405" y="350" width="1" height="2"/><rect x="406" y="350" width="1" height="7"/><rect x="407" y="353" width="1" height="4"/><rect x="408" y="353" width="1" height="3"/><rect x="409" y="354" width="1" height="2"/><rect x="410" y="351" width="1" height="5"/><rect x="411" y="351" width="1" height="2"/><rect x="412" y="351" width="1" height="3"/><rect x="413" y="352" width="1" height="3"/><rect x="414" y="353" width="1" height="7"/><rect x="415" y="356" width="1" height="4"/><rect x="416" y="352" width="1" height="6"/><rect x="417" y="352" width="1" height="5"/><rect x="418" y="355" width="1" height="3"/><rect x="419" y="353" width="1" height="5"/><rect x="420" y="353" width="1" height="5"/><rect x="421" y="356" width="1" height="2"/><rect x="422" y="351" width="1" height="7"/><rect x="423" y="351" width="1" height="5"/><rect x="424" y="349" width="1" height="7"/><rect x="425" y="349" width="1" height="4"/><rect x="426" y="351" width="1" height="2"/><rect x="427" y="349" width="1" height="4"/><rect x="428" y="349" width="1" height="13"/><rect x="429" y="354" width="1" height="8"/><rect x="430" y="354" width="1" height="6"/><rect x="431" y="355" width="1" height="5"/><rect x="432" y="354" width="1" height="3"/><rect x="433" y="349" width="1" height="7"/><rect x="434" y="349" width="1" height="6"/><rect x="435" y="348" width="1" height="7"/><rect x="436" y="348" width="1" height="9"/><rect x="437" y="354" width="1" height="3"/></g><rect x="438" y="293" width="1" height="133" fill="#e0e0e0"/></svg>
<div class="t" style="right:603px;top:286px;font-size:12px;letter-spacing:-0.6px">10</div>
<div class="t" style="right:603px;top:313px;font-size:12px;letter-spacing:-0.6px">8</div>
<div class="t" style="right:603px;top:340px;font-size:12px;letter-spacing:-0.6px">6</div>
<div class="t" style="right:603px;top:366px;font-size:12px;letter-spacing:-0.6px">4</div>
<div class="t" style="right:603px;top:393px;font-size:12px;letter-spacing:-0.6px">2</div>
<div class="t" style="left:470px;top:286px;font-size:12px;letter-spacing:-0.6px">20</div>
<div class="t" style="left:470px;top:313px;font-size:12px;letter-spacing:-0.6px">16</div>
<div class="t" style="left:470px;top:340px;font-size:12px;letter-spacing:-0.6px">12</div>
<div class="t" style="left:470px;top:366px;font-size:12px;letter-spacing:-0.6px">8</div>
<div class="t" style="left:470px;top:393px;font-size:12px;letter-spacing:-0.6px">4</div>
<div class="t" style="left:34.5px;width:30px;text-align:center;top:430px;font-size:12px;letter-spacing:-0.6px">0.0</div>
<div class="t" style="left:80.94444444444444px;width:30px;text-align:center;top:430px;font-size:12px;letter-spacing:-0.6px">0.5</div>
<div class="t" style="left:127.38888888888889px;width:30px;text-align:center;top:430px;font-size:12px;letter-spacing:-0.6px">1.0</div>
<div class="t" style="left:173.83333333333334px;width:30px;text-align:center;top:430px;font-size:12px;letter-spacing:-0.6px">1.5</div>
<div class="t" style="left:220.27777777777777px;width:30px;text-align:center;top:430px;font-size:12px;letter-spacing:-0.6px">2.0</div>
<div class="t" style="left:266.72222222222223px;width:30px;text-align:center;top:430px;font-size:12px;letter-spacing:-0.6px">2.5</div>
<div class="t" style="left:313.1666666666667px;width:30px;text-align:center;top:430px;font-size:12px;letter-spacing:-0.6px">3.0</div>
<div class="t" style="left:359.6111111111111px;width:30px;text-align:center;top:430px;font-size:12px;letter-spacing:-0.6px">3.5</div>
<div class="t" style="left:406.05555555555554px;width:30px;text-align:center;top:430px;font-size:12px;letter-spacing:-0.6px">4.0</div>
<div class="t" style="left:452.5px;width:30px;text-align:center;top:430px;font-size:12px;letter-spacing:-0.6px">4.5</div>
</body></html>
